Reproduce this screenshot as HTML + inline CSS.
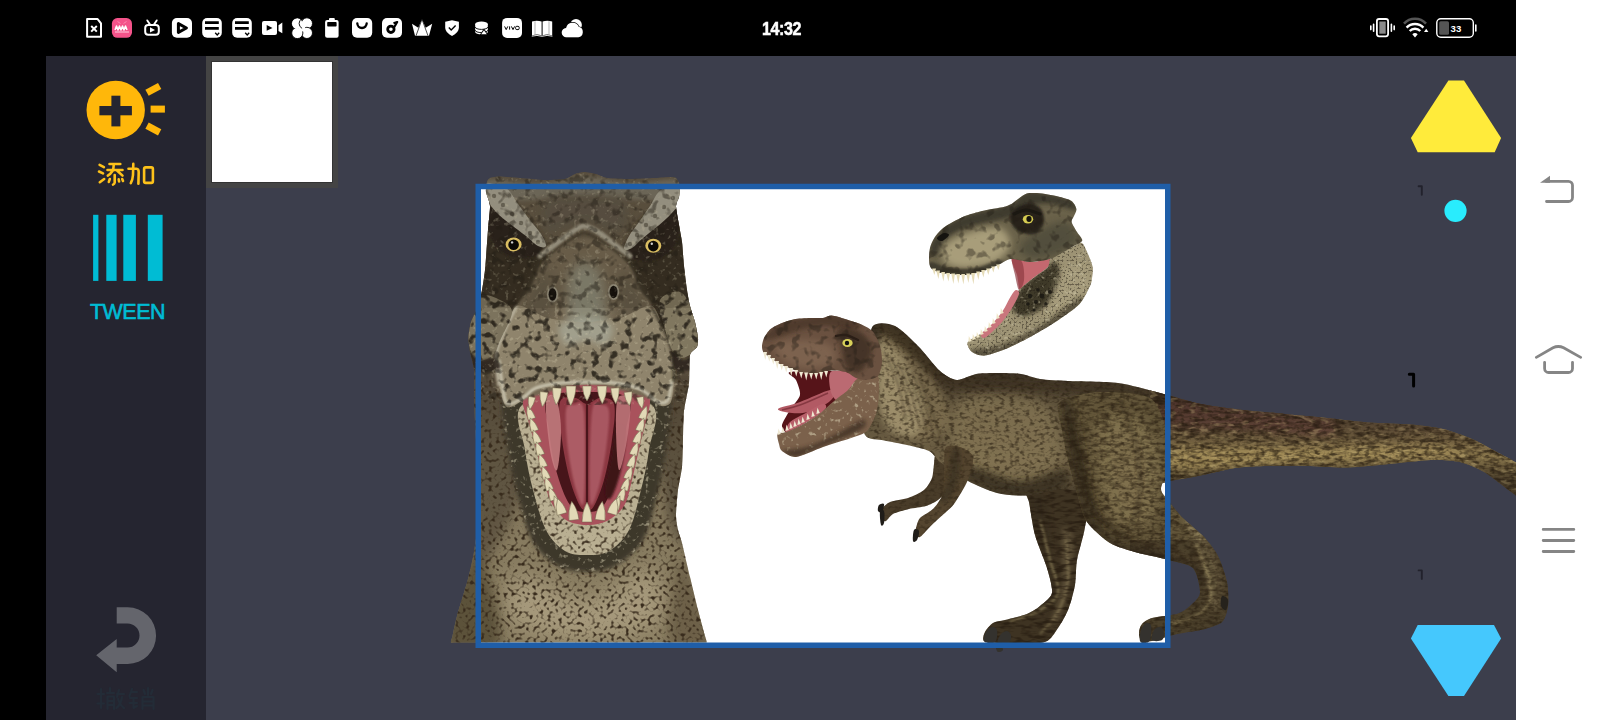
<!DOCTYPE html>
<html><head><meta charset="utf-8">
<style>
html,body{margin:0;padding:0;background:#000;}
body{width:1600px;height:720px;position:relative;overflow:hidden;font-family:"Liberation Sans",sans-serif;}
#status{position:absolute;left:0;top:0;width:1516px;height:56px;background:#000;}
#side{position:absolute;left:46px;top:56px;width:160px;height:664px;background:#252530;}
#main{position:absolute;left:206px;top:56px;width:1310px;height:664px;background:#3c3e4c;}
#nav{position:absolute;left:1516px;top:0;width:84px;height:720px;background:#fff;}
#thumb{position:absolute;left:206px;top:56px;width:132px;height:132px;background:#444;}
#thumb i{position:absolute;left:5px;top:5px;width:122px;height:122px;background:#333;}
#thumb b{position:absolute;left:6px;top:6px;width:120px;height:120px;background:#fff;}
#time{position:absolute;left:762px;top:18.6px;font-size:18.2px;font-weight:bold;color:#fff;letter-spacing:-0.5px;line-height:20px;transform:scaleX(0.885);transform-origin:0 0;-webkit-text-stroke:0.5px #fff;}
#tween{position:absolute;left:89px;top:300.4px;width:77px;text-align:center;font-size:21.5px;color:#00bcd4;line-height:24px;letter-spacing:-0.5px;-webkit-text-stroke:0.6px #00bcd4;}
svg{position:absolute;left:0;top:0;}
</style></head><body>
<div id="status"></div>
<div id="side"></div>
<div id="main"></div>
<div id="nav"></div>
<div id="thumb"><i></i><b></b></div>
<div id="time">14:32</div>
<div id="tween">TWEEN</div>
<!--SCENE--><svg id="scene" style="left:206px;top:56px" width="1310" height="664" viewBox="206 56 1310 664">
<defs>
<filter id="b1" x="-20%" y="-20%" width="140%" height="140%"><feGaussianBlur stdDeviation="1"/></filter>
<filter id="b2" x="-20%" y="-20%" width="140%" height="140%"><feGaussianBlur stdDeviation="2"/></filter>
<filter id="b3" x="-30%" y="-30%" width="160%" height="160%"><feGaussianBlur stdDeviation="3.5"/></filter>
<filter id="b6" x="-40%" y="-40%" width="180%" height="180%"><feGaussianBlur stdDeviation="6"/></filter>
<filter id="b10" x="-50%" y="-50%" width="200%" height="200%"><feGaussianBlur stdDeviation="10"/></filter>
<filter id="spots" x="0" y="0" width="100%" height="100%" color-interpolation-filters="sRGB">
 <feTurbulence type="fractalNoise" baseFrequency="0.27" numOctaves="1" seed="7"/>
 <feColorMatrix type="matrix" values="0 0 0 0 0.22  0 0 0 0 0.17  0 0 0 0 0.11  5 0 0 0 -2.6"/>
</filter>
<filter id="spotsL" x="0" y="0" width="100%" height="100%" color-interpolation-filters="sRGB">
 <feTurbulence type="fractalNoise" baseFrequency="0.22" numOctaves="2" seed="11"/>
 <feColorMatrix type="matrix" values="0 0 0 0 0.85  0 0 0 0 0.82  0 0 0 0 0.70  5 0 0 0 -3.0"/>
</filter>
<filter id="blotch" x="0" y="0" width="100%" height="100%" color-interpolation-filters="sRGB">
 <feTurbulence type="fractalNoise" baseFrequency="0.12" numOctaves="2" seed="5"/>
 <feColorMatrix type="matrix" values="0 0 0 0 0.13  0 0 0 0 0.11  0 0 0 0 0.08  6 0 0 0 -3.2"/>
</filter>
<filter id="wrk" x="0" y="0" width="100%" height="100%" color-interpolation-filters="sRGB">
 <feTurbulence type="fractalNoise" baseFrequency="0.2 0.3" numOctaves="2" seed="4"/>
 <feColorMatrix type="matrix" values="0 0 0 0 0.16  0 0 0 0 0.12  0 0 0 0 0.07  3.5 0 0 0 -1.65"/>
</filter>
<filter id="wrk2" x="0" y="0" width="100%" height="100%" color-interpolation-filters="sRGB">
 <feTurbulence type="fractalNoise" baseFrequency="0.09 0.28" numOctaves="2" seed="21"/>
 <feColorMatrix type="matrix" values="0 0 0 0 0.14  0 0 0 0 0.10  0 0 0 0 0.06  4 0 0 0 -1.8"/>
</filter>
<filter id="wrkL" x="0" y="0" width="100%" height="100%" color-interpolation-filters="sRGB">
 <feTurbulence type="fractalNoise" baseFrequency="0.1 0.22" numOctaves="2" seed="9"/>
 <feColorMatrix type="matrix" values="0 0 0 0 0.80  0 0 0 0 0.72  0 0 0 0 0.50  6 0 0 0 -3.3"/>
</filter>
<filter id="peb" x="0" y="0" width="100%" height="100%" color-interpolation-filters="sRGB">
 <feTurbulence type="fractalNoise" baseFrequency="0.5" numOctaves="1" seed="2"/>
 <feColorMatrix type="matrix" values="0 0 0 0 0.12  0 0 0 0 0.10  0 0 0 0 0.07  6 0 0 0 -3.1"/>
</filter>
</defs>
<rect x="478" y="186" width="690" height="459" fill="#fff"/>
<clipPath id="cF"><path d="M490.0,178.0 C491.5,177.4 496.5,176.5 500.0,176.5 C503.5,176.5 514.8,177.6 520.0,178.0 C525.2,178.4 539.8,179.9 545.0,180.0 C550.2,180.1 561.5,179.7 565.0,179.0 C568.5,178.3 572.8,174.8 575.0,174.0 C577.2,173.2 581.5,172.0 584.0,172.0 C586.5,172.0 593.3,173.3 596.0,174.0 C598.7,174.7 603.0,177.4 607.0,178.0 C611.0,178.6 624.4,179.0 630.0,179.0 C635.6,179.0 650.3,178.2 655.0,178.0 C659.7,177.8 667.5,177.0 670.0,177.0 C672.5,177.0 674.8,176.9 676.0,178.0 C677.2,179.1 679.6,183.8 680.0,186.0 C680.4,188.2 679.5,194.7 679.0,197.0 C678.5,199.3 676.0,202.7 676.0,206.0 C676.0,209.3 678.3,220.8 679.0,225.0 C679.7,229.2 681.4,237.2 682.0,242.0 C682.6,246.8 683.4,260.4 684.0,266.0 C684.6,271.6 686.3,285.3 687.0,290.0 C687.7,294.7 689.1,302.3 690.0,306.0 C690.9,309.7 694.1,318.3 695.0,322.0 C695.9,325.7 697.8,335.1 698.0,338.0 C698.2,340.9 697.9,345.0 697.0,347.0 C696.1,349.0 690.9,350.8 690.0,355.0 C689.1,359.2 689.7,376.5 689.0,383.0 C688.3,389.5 684.7,404.5 684.0,411.0 C683.3,417.5 683.2,432.5 683.0,439.0 C682.8,445.5 682.6,461.1 682.0,467.0 C681.4,472.9 678.7,484.4 678.0,490.0 C677.3,495.6 676.0,510.3 676.0,515.0 C676.0,519.7 677.3,526.7 678.0,530.0 C678.7,533.3 680.6,537.5 682.0,543.0 C683.4,548.5 688.1,569.2 690.0,577.0 C691.9,584.8 696.2,603.1 698.0,610.0 C699.8,616.9 704.0,632.2 705.0,636.0 C706.0,639.8 707.1,641.7 706.5,642.5 C705.9,643.3 712.4,642.5 700.0,642.5 C687.6,642.5 621.0,642.5 600.0,642.5 C579.0,642.5 536.6,642.5 520.0,642.5 C503.4,642.5 466.1,642.5 458.0,642.5 C449.9,642.5 451.6,643.3 451.0,642.5 C450.4,641.7 451.8,639.1 452.5,636.0 C453.2,632.9 455.2,622.6 457.0,616.0 C458.8,609.4 466.0,586.5 468.0,579.0 C470.0,571.5 472.8,558.9 474.0,552.0 C475.2,545.1 477.5,528.4 478.0,520.0 C478.5,511.6 478.2,489.3 478.0,480.0 C477.8,470.7 476.5,449.3 476.0,440.0 C475.5,430.7 474.2,408.2 474.0,400.0 C473.8,391.8 474.5,375.6 474.0,370.0 C473.5,364.4 470.6,355.9 470.0,352.0 C469.4,348.1 468.4,340.5 468.5,337.0 C468.6,333.5 470.1,325.0 471.0,322.0 C471.9,319.0 474.8,314.1 476.0,311.0 C477.2,307.9 479.9,299.8 481.0,295.0 C482.1,290.2 484.2,277.6 485.0,270.0 C485.8,262.4 487.4,237.5 488.0,230.0 C488.6,222.5 490.2,210.4 490.0,206.0 C489.8,201.6 486.4,194.8 486.0,192.0 C485.6,189.2 486.5,183.6 487.0,182.0 C487.5,180.4 488.5,178.6 490.0,178.0 Z"/></clipPath>
<linearGradient id="gF" x1="0" y1="172" x2="0" y2="642" gradientUnits="userSpaceOnUse">
<stop offset="0" stop-color="#615645"/><stop offset="0.45" stop-color="#695d49"/><stop offset="0.6" stop-color="#84785d"/><stop offset="1" stop-color="#8a7e62"/></linearGradient>
<g clip-path="url(#cF)">
<rect x="440" y="165" width="280" height="480" fill="url(#gF)"/>
<path d="M640.0,400.0 C646.7,385.0 690.0,356.7 700.0,380.0 C710.0,403.3 704.7,515.0 700.0,540.0 C695.3,565.0 678.7,541.7 672.0,530.0 C665.3,518.3 665.3,491.7 660.0,470.0 C654.7,448.3 633.3,415.0 640.0,400.0 Z" fill="#3a3226" filter="url(#b6)" opacity="0.55"/>
<path d="M470.0,380.0 C478.3,353.3 510.3,385.0 520.0,400.0 C529.7,415.0 531.3,446.7 528.0,470.0 C524.7,493.3 509.7,525.0 500.0,540.0 C490.3,555.0 475.0,586.7 470.0,560.0 C465.0,533.3 461.7,406.7 470.0,380.0 Z" fill="#3a3226" filter="url(#b6)" opacity="0.5"/>
<path d="M520.0,575.0 C532.8,571.7 565.3,600.8 587.0,600.0 C608.7,599.2 637.8,566.7 650.0,570.0 C662.2,573.3 670.5,608.3 660.0,620.0 C649.5,631.7 612.0,640.0 587.0,640.0 C562.0,640.0 521.2,630.8 510.0,620.0 C498.8,609.2 507.2,578.3 520.0,575.0 Z" fill="#c2b595" filter="url(#b10)" opacity="0.5"/>
<path d="M450.0,600.0 C455.8,585.8 471.7,552.5 480.0,560.0 C488.3,567.5 505.8,630.8 500.0,645.0 C494.2,659.2 453.3,652.5 445.0,645.0 C436.7,637.5 444.2,614.2 450.0,600.0 Z" fill="#4a3f2c" filter="url(#b6)" opacity="0.7"/>
<path d="M680.0,560.0 C685.0,552.5 694.7,585.8 700.0,600.0 C705.3,614.2 717.0,637.5 712.0,645.0 C707.0,652.5 675.3,659.2 670.0,645.0 C664.7,630.8 675.0,567.5 680.0,560.0 Z" fill="#5a4e38" filter="url(#b6)" opacity="0.6"/>
<rect x="440" y="380" width="280" height="265" filter="url(#spots)"/>
</g>
<g clip-path="url(#cF)">
<path d="M503.0,398.0 C506.7,386.8 516.0,386.3 530.0,383.0 C544.0,379.7 567.8,378.0 587.0,378.0 C606.2,378.0 631.2,379.7 645.0,383.0 C658.8,386.3 666.5,386.8 670.0,398.0 C673.5,409.2 668.3,433.0 666.0,450.0 C663.7,467.0 660.0,484.7 656.0,500.0 C652.0,515.3 648.8,531.0 642.0,542.0 C635.2,553.0 624.2,561.0 615.0,566.0 C605.8,571.0 596.5,572.0 587.0,572.0 C577.5,572.0 567.0,571.0 558.0,566.0 C549.0,561.0 539.5,553.0 533.0,542.0 C526.5,531.0 523.2,515.3 519.0,500.0 C514.8,484.7 510.7,467.0 508.0,450.0 C505.3,433.0 499.3,409.2 503.0,398.0 Z" fill="#3e372c" filter="url(#b2)"/>
<clipPath id="tc1"><path d="M503.0,398.0 C506.7,386.8 516.0,386.3 530.0,383.0 C544.0,379.7 567.8,378.0 587.0,378.0 C606.2,378.0 631.2,379.7 645.0,383.0 C658.8,386.3 666.5,386.8 670.0,398.0 C673.5,409.2 668.3,433.0 666.0,450.0 C663.7,467.0 660.0,484.7 656.0,500.0 C652.0,515.3 648.8,531.0 642.0,542.0 C635.2,553.0 624.2,561.0 615.0,566.0 C605.8,571.0 596.5,572.0 587.0,572.0 C577.5,572.0 567.0,571.0 558.0,566.0 C549.0,561.0 539.5,553.0 533.0,542.0 C526.5,531.0 523.2,515.3 519.0,500.0 C514.8,484.7 510.7,467.0 508.0,450.0 C505.3,433.0 499.3,409.2 503.0,398.0 Z"/></clipPath><g clip-path="url(#tc1)" ><rect x="495" y="374" width="182" height="202" filter="url(#spotsL)" opacity="0.5"/></g>
<path d="M522.0,405.0 C532.3,395.8 565.3,395.0 587.0,395.0 C608.7,395.0 641.7,395.8 652.0,405.0 C662.3,414.2 650.8,435.8 649.0,450.0 C647.2,464.2 644.3,476.7 641.0,490.0 C637.7,503.3 634.3,519.8 629.0,530.0 C623.7,540.2 616.0,546.8 609.0,551.0 C602.0,555.2 594.3,555.0 587.0,555.0 C579.7,555.0 571.8,555.2 565.0,551.0 C558.2,546.8 551.3,540.2 546.0,530.0 C540.7,519.8 536.5,503.3 533.0,490.0 C529.5,476.7 526.8,464.2 525.0,450.0 C523.2,435.8 511.7,414.2 522.0,405.0 Z" fill="#b9af92" />
<clipPath id="tc2"><path d="M522.0,405.0 C532.3,395.8 565.3,395.0 587.0,395.0 C608.7,395.0 641.7,395.8 652.0,405.0 C662.3,414.2 650.8,435.8 649.0,450.0 C647.2,464.2 644.3,476.7 641.0,490.0 C637.7,503.3 634.3,519.8 629.0,530.0 C623.7,540.2 616.0,546.8 609.0,551.0 C602.0,555.2 594.3,555.0 587.0,555.0 C579.7,555.0 571.8,555.2 565.0,551.0 C558.2,546.8 551.3,540.2 546.0,530.0 C540.7,519.8 536.5,503.3 533.0,490.0 C529.5,476.7 526.8,464.2 525.0,450.0 C523.2,435.8 511.7,414.2 522.0,405.0 Z"/></clipPath><g clip-path="url(#tc2)" ><rect x="508" y="391" width="159" height="168" filter="url(#spots)" opacity="0.9"/></g>
<path d="M523.0,401.0 C524.0,396.0 527.8,392.7 534.0,390.0 C540.2,387.3 550.7,386.0 560.0,385.0 C569.3,384.0 580.0,383.8 590.0,384.0 C600.0,384.2 610.7,384.5 620.0,386.0 C629.3,387.5 641.0,390.2 646.0,393.0 C651.0,395.8 650.2,397.7 650.0,403.0 C649.8,408.3 646.7,418.0 645.0,425.0 C643.3,432.0 642.2,435.8 640.0,445.0 C637.8,454.2 634.7,469.8 632.0,480.0 C629.3,490.2 628.2,499.2 624.0,506.0 C619.8,512.8 613.2,517.8 607.0,521.0 C600.8,524.2 593.8,525.2 587.0,525.0 C580.2,524.8 572.0,523.8 566.0,520.0 C560.0,516.2 554.8,509.2 551.0,502.0 C547.2,494.8 545.7,486.5 543.0,477.0 C540.3,467.5 537.5,454.5 535.0,445.0 C532.5,435.5 530.0,427.3 528.0,420.0 C526.0,412.7 522.0,406.0 523.0,401.0 Z" fill="#a9525c" />
<path d="M548.0,398.0 C554.3,391.7 573.7,392.0 587.0,392.0 C600.3,392.0 621.5,391.7 628.0,398.0 C634.5,404.3 627.7,418.0 626.0,430.0 C624.3,442.0 621.7,457.5 618.0,470.0 C614.3,482.5 609.2,498.0 604.0,505.0 C598.8,512.0 592.7,512.0 587.0,512.0 C581.3,512.0 575.2,512.0 570.0,505.0 C564.8,498.0 559.5,482.5 556.0,470.0 C552.5,457.5 550.3,442.0 549.0,430.0 C547.7,418.0 541.7,404.3 548.0,398.0 Z" fill="#47151a" />
<path d="M560.0,402.0 C562.2,395.0 570.5,397.7 575.0,398.0 C579.5,398.3 582.8,404.0 587.0,404.0 C591.2,404.0 595.5,398.0 600.0,398.0 C604.5,398.0 612.0,397.0 614.0,404.0 C616.0,411.0 613.7,427.3 612.0,440.0 C610.3,452.7 607.0,469.0 604.0,480.0 C601.0,491.0 596.8,501.0 594.0,506.0 C591.2,511.0 589.3,510.0 587.0,510.0 C584.7,510.0 582.8,511.0 580.0,506.0 C577.2,501.0 573.0,491.0 570.0,480.0 C567.0,469.0 563.7,453.0 562.0,440.0 C560.3,427.0 557.8,409.0 560.0,402.0 Z" fill="#8c3842" />
<path d="M566.0,410.0 C567.0,402.5 571.0,404.7 574.0,405.0 C577.0,405.3 582.3,396.2 584.0,412.0 C585.7,427.8 585.3,487.0 584.0,500.0 C582.7,513.0 578.7,498.3 576.0,490.0 C573.3,481.7 569.7,463.3 568.0,450.0 C566.3,436.7 565.0,417.5 566.0,410.0 Z" fill="#b5666e" filter="url(#b1)" opacity="0.8"/>
<path d="M592.0,412.0 C594.0,396.2 599.2,405.0 602.0,405.0 C604.8,405.0 608.3,404.5 609.0,412.0 C609.7,419.5 607.8,437.0 606.0,450.0 C604.2,463.0 600.7,481.7 598.0,490.0 C595.3,498.3 591.0,513.0 590.0,500.0 C589.0,487.0 590.0,427.8 592.0,412.0 Z" fill="#b0606a" filter="url(#b1)" opacity="0.8"/>
<path d="M587.0,404.0 L587.0,508.0" fill="none" stroke="#4a151b" stroke-width="2.2"/>
<path d="M616.0,425.0 C618.3,421.2 625.2,424.5 626.0,432.0 C626.8,439.5 623.5,459.0 621.0,470.0 C618.5,481.0 613.7,494.7 611.0,498.0 C608.3,501.3 604.8,497.2 605.0,490.0 C605.2,482.8 610.2,465.8 612.0,455.0 C613.8,444.2 613.7,428.8 616.0,425.0 Z" fill="#3d1217" filter="url(#b1)"/>
<path d="M546.0,402.0 C547.0,393.3 553.5,393.3 556.0,398.0 C558.5,402.7 560.8,418.0 561.0,430.0 C561.2,442.0 558.8,466.7 557.0,470.0 C555.2,473.3 551.8,461.3 550.0,450.0 C548.2,438.7 545.0,410.7 546.0,402.0 Z" fill="#c47c80" opacity="0.9"/>
<path d="M618.0,398.0 C620.3,393.3 628.5,395.0 630.0,402.0 C631.5,409.0 628.8,428.7 627.0,440.0 C625.2,451.3 620.8,471.7 619.0,470.0 C617.2,468.3 616.2,442.0 616.0,430.0 C615.8,418.0 615.7,402.7 618.0,398.0 Z" fill="#bf767a" opacity="0.9"/>
<path d="M-3.8,0 Q-3.8,7.7 0,14.0 Q3.8,7.7 3.8,0 Z" transform="translate(532.0,419.0) rotate(160)" fill="#e2d9b6" stroke="#6d6248" stroke-width="0.5"/>
<path d="M-3.8,0 Q-3.8,7.7 0,14.0 Q3.8,7.7 3.8,0 Z" transform="translate(535.0,431.0) rotate(160)" fill="#e2d9b6" stroke="#6d6248" stroke-width="0.5"/>
<path d="M-3.8,0 Q-3.8,7.7 0,14.0 Q3.8,7.7 3.8,0 Z" transform="translate(538.0,443.0) rotate(160)" fill="#e2d9b6" stroke="#6d6248" stroke-width="0.5"/>
<path d="M-3.8,0 Q-3.8,7.7 0,14.0 Q3.8,7.7 3.8,0 Z" transform="translate(541.0,455.0) rotate(160)" fill="#e2d9b6" stroke="#6d6248" stroke-width="0.5"/>
<path d="M-3.8,0 Q-3.8,7.7 0,14.0 Q3.8,7.7 3.8,0 Z" transform="translate(544.0,467.0) rotate(160)" fill="#e2d9b6" stroke="#6d6248" stroke-width="0.5"/>
<path d="M-3.8,0 Q-3.8,7.7 0,14.0 Q3.8,7.7 3.8,0 Z" transform="translate(547.0,479.0) rotate(160)" fill="#e2d9b6" stroke="#6d6248" stroke-width="0.5"/>
<path d="M-3.8,0 Q-3.8,7.7 0,14.0 Q3.8,7.7 3.8,0 Z" transform="translate(550.0,490.0) rotate(160)" fill="#e2d9b6" stroke="#6d6248" stroke-width="0.5"/>
<path d="M-3.8,0 Q-3.8,7.7 0,14.0 Q3.8,7.7 3.8,0 Z" transform="translate(554.0,500.0) rotate(160)" fill="#e2d9b6" stroke="#6d6248" stroke-width="0.5"/>
<path d="M-3.8,0 Q-3.8,7.7 0,14.0 Q3.8,7.7 3.8,0 Z" transform="translate(559.0,509.0) rotate(160)" fill="#e2d9b6" stroke="#6d6248" stroke-width="0.5"/>
<path d="M-3.8,0 Q-3.8,7.7 0,14.0 Q3.8,7.7 3.8,0 Z" transform="translate(642.0,419.0) rotate(200)" fill="#e2d9b6" stroke="#6d6248" stroke-width="0.5"/>
<path d="M-3.8,0 Q-3.8,7.7 0,14.0 Q3.8,7.7 3.8,0 Z" transform="translate(639.0,431.0) rotate(200)" fill="#e2d9b6" stroke="#6d6248" stroke-width="0.5"/>
<path d="M-3.8,0 Q-3.8,7.7 0,14.0 Q3.8,7.7 3.8,0 Z" transform="translate(636.0,443.0) rotate(200)" fill="#e2d9b6" stroke="#6d6248" stroke-width="0.5"/>
<path d="M-3.8,0 Q-3.8,7.7 0,14.0 Q3.8,7.7 3.8,0 Z" transform="translate(633.0,455.0) rotate(200)" fill="#e2d9b6" stroke="#6d6248" stroke-width="0.5"/>
<path d="M-3.8,0 Q-3.8,7.7 0,14.0 Q3.8,7.7 3.8,0 Z" transform="translate(630.0,467.0) rotate(200)" fill="#e2d9b6" stroke="#6d6248" stroke-width="0.5"/>
<path d="M-3.8,0 Q-3.8,7.7 0,14.0 Q3.8,7.7 3.8,0 Z" transform="translate(627.0,479.0) rotate(200)" fill="#e2d9b6" stroke="#6d6248" stroke-width="0.5"/>
<path d="M-3.8,0 Q-3.8,7.7 0,14.0 Q3.8,7.7 3.8,0 Z" transform="translate(624.0,490.0) rotate(200)" fill="#e2d9b6" stroke="#6d6248" stroke-width="0.5"/>
<path d="M-3.8,0 Q-3.8,7.7 0,14.0 Q3.8,7.7 3.8,0 Z" transform="translate(620.0,500.0) rotate(200)" fill="#e2d9b6" stroke="#6d6248" stroke-width="0.5"/>
<path d="M-3.8,0 Q-3.8,7.7 0,14.0 Q3.8,7.7 3.8,0 Z" transform="translate(615.0,509.0) rotate(200)" fill="#e2d9b6" stroke="#6d6248" stroke-width="0.5"/>
<path d="M-5.0,0 Q-5.0,8.8 0,16.0 Q5.0,8.8 5.0,0 Z" transform="translate(562.0,514.0) rotate(164)" fill="#e2d9b6" stroke="#6d6248" stroke-width="0.5"/>
<path d="M-5.0,0 Q-5.0,10.5 0,19.0 Q5.0,10.5 5.0,0 Z" transform="translate(574.0,520.0) rotate(173)" fill="#e2d9b6" stroke="#6d6248" stroke-width="0.5"/>
<path d="M-5.0,0 Q-5.0,11.0 0,20.0 Q5.0,11.0 5.0,0 Z" transform="translate(587.0,522.0) rotate(180)" fill="#e2d9b6" stroke="#6d6248" stroke-width="0.5"/>
<path d="M-5.0,0 Q-5.0,10.5 0,19.0 Q5.0,10.5 5.0,0 Z" transform="translate(600.0,520.0) rotate(187)" fill="#e2d9b6" stroke="#6d6248" stroke-width="0.5"/>
<path d="M-5.0,0 Q-5.0,8.8 0,16.0 Q5.0,8.8 5.0,0 Z" transform="translate(612.0,514.0) rotate(196)" fill="#e2d9b6" stroke="#6d6248" stroke-width="0.5"/>
</g>
<g clip-path="url(#cF)">
<path d="M483.0,200.0 C492.2,185.8 509.7,206.7 520.0,215.0 C530.3,223.3 543.3,235.8 545.0,250.0 C546.7,264.2 536.7,284.2 530.0,300.0 C523.3,315.8 515.0,335.8 505.0,345.0 C495.0,354.2 476.7,362.5 470.0,355.0 C463.3,347.5 462.8,325.8 465.0,300.0 C467.2,274.2 473.8,214.2 483.0,200.0 Z" fill="#352d22" filter="url(#b3)" opacity="0.95"/>
<path d="M682.0,200.0 C673.7,185.8 659.5,206.7 650.0,215.0 C640.5,223.3 626.7,235.8 625.0,250.0 C623.3,264.2 633.8,284.2 640.0,300.0 C646.2,315.8 652.0,335.8 662.0,345.0 C672.0,354.2 693.7,362.5 700.0,355.0 C706.3,347.5 703.0,325.8 700.0,300.0 C697.0,274.2 690.3,214.2 682.0,200.0 Z" fill="#352d22" filter="url(#b3)" opacity="0.95"/>
<path d="M488.0,180.0 C496.3,177.7 524.0,184.7 540.0,184.0 C556.0,183.3 569.0,176.2 584.0,176.0 C599.0,175.8 614.3,182.3 630.0,183.0 C645.7,183.7 670.3,177.5 678.0,180.0 C685.7,182.5 682.3,194.7 676.0,198.0 C669.7,201.3 655.3,200.3 640.0,200.0 C624.7,199.7 602.3,196.0 584.0,196.0 C565.7,196.0 545.7,199.7 530.0,200.0 C514.3,200.3 497.0,201.3 490.0,198.0 C483.0,194.7 479.7,182.3 488.0,180.0 Z" fill="#7d7767" filter="url(#b2)" opacity="0.9"/>
<path d="M545.0,200.0 C551.0,194.0 570.7,196.0 584.0,196.0 C597.3,196.0 619.0,194.0 625.0,200.0 C631.0,206.0 626.8,228.3 620.0,232.0 C613.2,235.7 596.0,222.0 584.0,222.0 C572.0,222.0 554.5,235.7 548.0,232.0 C541.5,228.3 539.0,206.0 545.0,200.0 Z" fill="#5e574a" filter="url(#b3)" opacity="0.8"/>
<path d="M489.0,200.0 C491.7,199.0 497.8,209.7 503.0,214.0 C508.2,218.3 514.7,222.0 520.0,226.0 C525.3,230.0 531.2,234.5 535.0,238.0 C538.8,241.5 542.8,244.0 543.0,247.0 C543.2,250.0 540.2,254.2 536.0,256.0 C531.8,257.8 523.7,258.7 518.0,258.0 C512.3,257.3 506.3,255.0 502.0,252.0 C497.7,249.0 494.5,245.3 492.0,240.0 C489.5,234.7 487.5,226.7 487.0,220.0 C486.5,213.3 486.3,201.0 489.0,200.0 Z" fill="#2a231a" filter="url(#b1)"/>
<path d="M678.0,202.0 C675.3,201.0 669.0,211.7 664.0,216.0 C659.0,220.3 653.0,224.0 648.0,228.0 C643.0,232.0 637.7,236.5 634.0,240.0 C630.3,243.5 626.3,246.0 626.0,249.0 C625.7,252.0 628.0,256.0 632.0,258.0 C636.0,260.0 644.3,261.5 650.0,261.0 C655.7,260.5 661.7,258.0 666.0,255.0 C670.3,252.0 673.7,248.5 676.0,243.0 C678.3,237.5 679.7,228.8 680.0,222.0 C680.3,215.2 680.7,203.0 678.0,202.0 Z" fill="#2a231a" filter="url(#b1)"/>
<path d="M486.0,184.0 C489.0,182.0 500.7,184.7 506.0,188.0 C511.3,191.3 514.0,198.7 518.0,204.0 C522.0,209.3 526.2,215.0 530.0,220.0 C533.8,225.0 538.3,229.7 541.0,234.0 C543.7,238.3 546.5,244.0 546.0,246.0 C545.5,248.0 541.3,247.7 538.0,246.0 C534.7,244.3 530.7,239.7 526.0,236.0 C521.3,232.3 515.0,228.0 510.0,224.0 C505.0,220.0 499.7,216.0 496.0,212.0 C492.3,208.0 489.7,204.7 488.0,200.0 C486.3,195.3 483.0,186.0 486.0,184.0 Z" fill="#a9a493" />
<path d="M681.0,186.0 C677.8,184.0 666.2,186.7 661.0,190.0 C655.8,193.3 653.7,200.7 650.0,206.0 C646.3,211.3 642.5,217.0 639.0,222.0 C635.5,227.0 631.5,231.5 629.0,236.0 C626.5,240.5 623.5,247.0 624.0,249.0 C624.5,251.0 628.8,249.8 632.0,248.0 C635.2,246.2 638.7,241.7 643.0,238.0 C647.3,234.3 653.3,230.0 658.0,226.0 C662.7,222.0 667.3,218.0 671.0,214.0 C674.7,210.0 678.3,206.7 680.0,202.0 C681.7,197.3 684.2,188.0 681.0,186.0 Z" fill="#a9a493" />
<circle cx="494" cy="196" r="2.2" fill="#5a5447" opacity="0.7"/>
<circle cx="503" cy="205" r="2.2" fill="#5a5447" opacity="0.7"/>
<circle cx="512" cy="214" r="2.2" fill="#5a5447" opacity="0.7"/>
<circle cx="521" cy="223" r="2.2" fill="#5a5447" opacity="0.7"/>
<circle cx="530" cy="233" r="2.2" fill="#5a5447" opacity="0.7"/>
<circle cx="538" cy="242" r="2.2" fill="#5a5447" opacity="0.7"/>
<circle cx="673" cy="198" r="2.2" fill="#5a5447" opacity="0.7"/>
<circle cx="664" cy="207" r="2.2" fill="#5a5447" opacity="0.7"/>
<circle cx="655" cy="216" r="2.2" fill="#5a5447" opacity="0.7"/>
<circle cx="646" cy="225" r="2.2" fill="#5a5447" opacity="0.7"/>
<circle cx="637" cy="235" r="2.2" fill="#5a5447" opacity="0.7"/>
<circle cx="630" cy="244" r="2.2" fill="#5a5447" opacity="0.7"/>
<path d="M540.0,256.0 C542.7,254.0 550.7,248.0 556.0,244.0 C561.3,240.0 567.3,235.0 572.0,232.0 C576.7,229.0 579.7,226.0 584.0,226.0 C588.3,226.0 593.0,229.0 598.0,232.0 C603.0,235.0 608.7,240.0 614.0,244.0 C619.3,248.0 627.3,254.0 630.0,256.0" fill="none" stroke="#a8a28f" stroke-width="5" stroke-linecap="round" filter="url(#b1)"/>
<path d="M541.0,262.0 C543.7,260.0 551.8,253.8 557.0,250.0 C562.2,246.2 567.5,241.8 572.0,239.0 C576.5,236.2 579.7,233.0 584.0,233.0 C588.3,233.0 593.2,236.2 598.0,239.0 C602.8,241.8 607.8,246.2 613.0,250.0 C618.2,253.8 626.3,260.0 629.0,262.0" fill="none" stroke="#3f382c" stroke-width="2.5" filter="url(#b1)" opacity="0.8"/>
<path d="M544.0,262.0 C553.0,253.3 570.3,238.0 584.0,238.0 C597.7,238.0 616.7,253.3 626.0,262.0 C635.3,270.7 635.7,282.7 640.0,290.0 C644.3,297.3 646.7,295.2 652.0,306.0 C657.3,316.8 669.3,339.3 672.0,355.0 C674.7,370.7 682.2,395.2 668.0,400.0 C653.8,404.8 613.7,384.0 587.0,384.0 C560.3,384.0 523.2,404.8 508.0,400.0 C492.8,395.2 494.5,370.7 496.0,355.0 C497.5,339.3 511.3,316.8 517.0,306.0 C522.7,295.2 525.5,297.3 530.0,290.0 C534.5,282.7 535.0,270.7 544.0,262.0 Z" fill="#746853" filter="url(#b1)"/>
<path d="M570.0,275.0 C572.7,265.3 579.0,262.0 584.0,262.0 C589.0,262.0 596.3,265.3 600.0,275.0 C603.7,284.7 606.0,307.5 606.0,320.0 C606.0,332.5 605.2,345.0 600.0,350.0 C594.8,355.0 580.3,355.0 575.0,350.0 C569.7,345.0 568.8,332.5 568.0,320.0 C567.2,307.5 567.3,284.7 570.0,275.0 Z" fill="#959887" filter="url(#b6)" opacity="0.7"/>
<path d="M520.0,310.0 C526.7,296.3 539.0,271.7 545.0,270.0 C551.0,268.3 556.8,287.5 556.0,300.0 C555.2,312.5 548.5,336.3 540.0,345.0 C531.5,353.7 508.3,357.8 505.0,352.0 C501.7,346.2 513.3,323.7 520.0,310.0 Z" fill="#57503f" filter="url(#b6)" opacity="0.55"/>
<path d="M650.0,310.0 C643.7,296.3 631.7,271.7 626.0,270.0 C620.3,268.3 615.3,287.5 616.0,300.0 C616.7,312.5 622.0,336.3 630.0,345.0 C638.0,353.7 660.7,357.8 664.0,352.0 C667.3,346.2 656.3,323.7 650.0,310.0 Z" fill="#57503f" filter="url(#b6)" opacity="0.55"/>
<path d="M517.8,305.6 C512.1,307.2 508.0,323.3 505.0,330.0 C502.0,336.7 496.4,348.3 495.6,355.6 C494.8,362.9 497.5,378.1 499.0,385.0 C500.5,391.9 503.5,405.0 506.7,407.0 C509.9,409.0 519.3,402.3 523.0,400.0 C526.7,397.7 530.0,391.9 534.4,390.0 C538.8,388.1 550.1,386.7 556.0,386.0 C561.9,385.3 572.2,384.9 579.0,384.7 C585.8,384.5 600.2,384.3 606.7,384.7 C613.2,385.1 622.8,386.9 628.0,388.0 C633.2,389.1 641.4,390.7 645.6,393.0 C649.8,395.3 656.1,404.3 659.4,405.6 C662.7,406.9 668.7,406.2 670.6,402.8 C672.5,399.4 673.6,386.3 674.0,380.0 C674.4,373.7 674.6,362.3 673.3,355.6 C672.0,348.9 667.0,336.7 664.0,330.0 C661.0,323.3 656.9,307.2 651.0,305.6 C645.1,304.0 628.9,315.8 620.0,318.0 C611.1,320.2 593.6,322.0 584.0,322.0 C574.4,322.0 556.8,320.2 548.0,318.0 C539.2,315.8 523.5,304.0 517.8,305.6 Z" fill="#8f846c" />
<clipPath id="tc3"><path d="M517.8,305.6 C512.1,307.2 508.0,323.3 505.0,330.0 C502.0,336.7 496.4,348.3 495.6,355.6 C494.8,362.9 497.5,378.1 499.0,385.0 C500.5,391.9 503.5,405.0 506.7,407.0 C509.9,409.0 519.3,402.3 523.0,400.0 C526.7,397.7 530.0,391.9 534.4,390.0 C538.8,388.1 550.1,386.7 556.0,386.0 C561.9,385.3 572.2,384.9 579.0,384.7 C585.8,384.5 600.2,384.3 606.7,384.7 C613.2,385.1 622.8,386.9 628.0,388.0 C633.2,389.1 641.4,390.7 645.6,393.0 C649.8,395.3 656.1,404.3 659.4,405.6 C662.7,406.9 668.7,406.2 670.6,402.8 C672.5,399.4 673.6,386.3 674.0,380.0 C674.4,373.7 674.6,362.3 673.3,355.6 C672.0,348.9 667.0,336.7 664.0,330.0 C661.0,323.3 656.9,307.2 651.0,305.6 C645.1,304.0 628.9,315.8 620.0,318.0 C611.1,320.2 593.6,322.0 584.0,322.0 C574.4,322.0 556.8,320.2 548.0,318.0 C539.2,315.8 523.5,304.0 517.8,305.6 Z"/></clipPath><g clip-path="url(#tc3)" ><rect x="491" y="300" width="188" height="113" filter="url(#blotch)" opacity="0.65"/></g>
<path d="M499.0,360.0 C499.7,365.0 501.5,382.7 503.0,390.0 C504.5,397.3 504.5,402.8 508.0,404.0 C511.5,405.2 519.3,399.7 524.0,397.0 C528.7,394.3 530.0,390.3 536.0,388.0 C542.0,385.7 551.5,384.0 560.0,383.0 C568.5,382.0 577.8,382.0 587.0,382.0 C596.2,382.0 606.2,381.8 615.0,383.0 C623.8,384.2 632.8,385.8 640.0,389.0 C647.2,392.2 653.3,400.2 658.0,402.0 C662.7,403.8 665.7,403.7 668.0,400.0 C670.3,396.3 671.3,383.3 672.0,380.0" fill="none" stroke="#cfcab6" stroke-width="3" filter="url(#b1)" opacity="0.9"/>
<path d="M517.0,306.0 C515.0,310.0 508.5,321.7 505.0,330.0 C501.5,338.3 497.0,346.7 496.0,356.0 C495.0,365.3 498.5,381.0 499.0,386.0" fill="none" stroke="#c9c4b0" stroke-width="2.5" filter="url(#b1)" opacity="0.8"/>
<path d="M651.0,306.0 C653.2,310.0 660.3,321.7 664.0,330.0 C667.7,338.3 671.3,347.3 673.0,356.0 C674.7,364.7 673.8,377.7 674.0,382.0" fill="none" stroke="#2d261c" stroke-width="3" filter="url(#b1)" opacity="0.7"/>
<path d="M560.0,325.0 C563.5,320.5 578.3,318.0 587.0,318.0 C595.7,318.0 608.8,320.5 612.0,325.0 C615.2,329.5 610.2,342.5 606.0,345.0 C601.8,347.5 593.7,340.0 587.0,340.0 C580.3,340.0 570.5,347.5 566.0,345.0 C561.5,342.5 556.5,329.5 560.0,325.0 Z" fill="#a9ab9b" filter="url(#b3)" opacity="0.7"/>
<ellipse cx="552.5" cy="294.5" rx="5.6" ry="8" fill="#9c9582"/>
<ellipse cx="552.5" cy="294.5" rx="3.9" ry="6.2" fill="#120e0a"/>
<ellipse cx="613.6" cy="292" rx="5.6" ry="8" fill="#9c9582"/>
<ellipse cx="613.6" cy="292" rx="3.9" ry="6.2" fill="#120e0a"/>
<path d="M481.0,296.0 C485.8,293.0 494.8,297.3 500.0,300.0 C505.2,302.7 512.0,305.3 512.0,312.0 C512.0,318.7 503.3,332.7 500.0,340.0 C496.7,347.3 496.0,352.7 492.0,356.0 C488.0,359.3 480.0,362.7 476.0,360.0 C472.0,357.3 468.8,347.0 468.0,340.0 C467.2,333.0 468.8,325.3 471.0,318.0 C473.2,310.7 476.2,299.0 481.0,296.0 Z" fill="#7c735d" />
<clipPath id="tc4"><path d="M481.0,296.0 C485.8,293.0 494.8,297.3 500.0,300.0 C505.2,302.7 512.0,305.3 512.0,312.0 C512.0,318.7 503.3,332.7 500.0,340.0 C496.7,347.3 496.0,352.7 492.0,356.0 C488.0,359.3 480.0,362.7 476.0,360.0 C472.0,357.3 468.8,347.0 468.0,340.0 C467.2,333.0 468.8,325.3 471.0,318.0 C473.2,310.7 476.2,299.0 481.0,296.0 Z"/></clipPath><g clip-path="url(#tc4)" ><rect x="463" y="289" width="53" height="78" filter="url(#blotch)" opacity="0.7"/></g>
<path d="M660.0,300.0 C662.7,294.5 674.7,290.3 680.0,292.0 C685.3,293.7 688.8,302.3 692.0,310.0 C695.2,317.7 698.3,331.3 699.0,338.0 C699.7,344.7 698.8,346.7 696.0,350.0 C693.2,353.3 686.0,358.0 682.0,358.0 C678.0,358.0 675.0,355.5 672.0,350.0 C669.0,344.5 666.0,333.3 664.0,325.0 C662.0,316.7 657.3,305.5 660.0,300.0 Z" fill="#80775f" />
<clipPath id="tc5"><path d="M660.0,300.0 C662.7,294.5 674.7,290.3 680.0,292.0 C685.3,293.7 688.8,302.3 692.0,310.0 C695.2,317.7 698.3,331.3 699.0,338.0 C699.7,344.7 698.8,346.7 696.0,350.0 C693.2,353.3 686.0,358.0 682.0,358.0 C678.0,358.0 675.0,355.5 672.0,350.0 C669.0,344.5 666.0,333.3 664.0,325.0 C662.0,316.7 657.3,305.5 660.0,300.0 Z"/></clipPath><g clip-path="url(#tc5)" ><rect x="653" y="286" width="50" height="76" filter="url(#blotch)" opacity="0.7"/></g>
<path d="M470.0,352.0 C470.7,350.0 476.0,359.0 480.0,360.0 C484.0,361.0 490.7,356.7 494.0,358.0 C497.3,359.3 503.0,365.7 500.0,368.0 C497.0,370.3 481.0,374.7 476.0,372.0 C471.0,369.3 469.3,354.0 470.0,352.0 Z" fill="#2a231a" filter="url(#b1)" opacity="0.85"/>
<path d="M672.0,352.0 C673.3,350.3 679.7,360.0 684.0,360.0 C688.3,360.0 696.3,350.7 698.0,352.0 C699.7,353.3 697.7,365.0 694.0,368.0 C690.3,371.0 679.7,372.7 676.0,370.0 C672.3,367.3 670.7,353.7 672.0,352.0 Z" fill="#2a231a" filter="url(#b1)" opacity="0.85"/>
<clipPath id="cHeadTex"><path d="M465.0,170.0 C504.7,138.3 660.0,138.3 700.0,170.0 C740.0,201.7 706.7,321.7 705.0,360.0 C703.3,398.3 727.5,393.3 690.0,400.0 C652.5,406.7 518.0,406.7 480.0,400.0 C442.0,393.3 464.5,398.3 462.0,360.0 C459.5,321.7 425.3,201.7 465.0,170.0 Z"/></clipPath>
<g clip-path="url(#cHeadTex)"><rect x="460" y="168" width="250" height="240" filter="url(#blotch)" opacity="0.45"/><rect x="460" y="168" width="250" height="240" filter="url(#spotsL)" opacity="0.3"/></g>
<rect x="460" y="168" width="250" height="140" fill="#241d14" opacity="0.16"/>
<ellipse cx="513.6" cy="244.4" rx="8" ry="7" fill="#d9bd62"/>
<circle cx="513.6" cy="244.70000000000002" r="5.3" fill="#0b0907"/>
<circle cx="512.1" cy="242.4" r="1.2" fill="#fff" opacity="0.8"/>
<ellipse cx="653.3" cy="245.8" rx="8" ry="7" fill="#d9bd62"/>
<circle cx="653.3" cy="246.10000000000002" r="5.3" fill="#0b0907"/>
<circle cx="651.8" cy="243.8" r="1.2" fill="#fff" opacity="0.8"/>
<path d="M-3.5,0 Q-3.5,7.2 0,13.0 Q3.5,7.2 3.5,0 Z" transform="translate(532.0,397.0) rotate(10)" fill="#e2d9b6" stroke="#6d6248" stroke-width="0.5"/>
<path d="M-4.0,0 Q-4.0,8.2 0,15.0 Q4.0,8.2 4.0,0 Z" transform="translate(544.0,392.0) rotate(6)" fill="#e2d9b6" stroke="#6d6248" stroke-width="0.5"/>
<path d="M-4.5,0 Q-4.5,9.4 0,17.0 Q4.5,9.4 4.5,0 Z" transform="translate(557.0,388.0) rotate(3)" fill="#e2d9b6" stroke="#6d6248" stroke-width="0.5"/>
<path d="M-5.0,0 Q-5.0,11.0 0,20.0 Q5.0,11.0 5.0,0 Z" transform="translate(571.0,386.0) rotate(1)" fill="#e2d9b6" stroke="#6d6248" stroke-width="0.5"/>
<path d="M-4.5,0 Q-4.5,8.2 0,15.0 Q4.5,8.2 4.5,0 Z" transform="translate(587.0,386.0) rotate(0)" fill="#e2d9b6" stroke="#6d6248" stroke-width="0.5"/>
<path d="M-4.8,0 Q-4.8,9.9 0,18.0 Q4.8,9.9 4.8,0 Z" transform="translate(602.0,386.0) rotate(-1)" fill="#e2d9b6" stroke="#6d6248" stroke-width="0.5"/>
<path d="M-4.2,0 Q-4.2,8.8 0,16.0 Q4.2,8.8 4.2,0 Z" transform="translate(615.0,388.0) rotate(-3)" fill="#e2d9b6" stroke="#6d6248" stroke-width="0.5"/>
<path d="M-4.0,0 Q-4.0,7.7 0,14.0 Q4.0,7.7 4.0,0 Z" transform="translate(628.0,392.0) rotate(-6)" fill="#e2d9b6" stroke="#6d6248" stroke-width="0.5"/>
<path d="M-3.5,0 Q-3.5,6.6 0,12.0 Q3.5,6.6 3.5,0 Z" transform="translate(640.0,397.0) rotate(-10)" fill="#e2d9b6" stroke="#6d6248" stroke-width="0.5"/>
</g>
<linearGradient id="gBody" x1="0" y1="370" x2="0" y2="500" gradientUnits="userSpaceOnUse">
<stop offset="0" stop-color="#3a3024"/><stop offset="0.25" stop-color="#5c503a"/><stop offset="0.7" stop-color="#6e6045"/><stop offset="1" stop-color="#443a2a"/></linearGradient>
<linearGradient id="gTail" x1="0" y1="400" x2="0" y2="480" gradientUnits="userSpaceOnUse">
<stop offset="0" stop-color="#3d2f22"/><stop offset="0.35" stop-color="#5a4934"/><stop offset="0.7" stop-color="#8a774c"/><stop offset="1" stop-color="#473b28"/></linearGradient>
<path d="M1024.0,478.0 C1015.9,480.9 1027.5,494.4 1029.0,502.0 C1030.5,509.6 1032.6,526.2 1035.0,535.0 C1037.4,543.8 1044.7,560.3 1047.0,568.0 C1049.3,575.7 1052.9,587.9 1052.0,593.0 C1051.1,598.1 1043.3,603.2 1040.0,606.0 C1036.7,608.8 1031.7,612.1 1027.0,614.0 C1022.3,615.9 1009.5,618.8 1005.0,620.0 C1000.5,621.2 995.7,621.4 993.0,623.0 C990.3,624.6 986.2,629.6 985.0,632.0 C983.8,634.4 982.0,639.5 984.0,641.0 C986.0,642.5 992.1,642.8 1000.0,643.0 C1007.9,643.2 1035.5,644.1 1043.0,642.5 C1050.5,640.9 1052.7,635.3 1056.0,631.0 C1059.3,626.7 1065.5,616.1 1068.0,610.0 C1070.5,603.9 1073.8,591.7 1075.0,585.0 C1076.2,578.3 1075.7,567.7 1077.0,560.0 C1078.3,552.3 1083.3,537.7 1085.0,527.0 C1086.7,516.3 1098.1,486.5 1090.0,480.0 C1081.9,473.5 1032.1,475.1 1024.0,478.0 Z" fill="#4c402b" />
<clipPath id="tc6"><path d="M1024.0,478.0 C1015.9,480.9 1027.5,494.4 1029.0,502.0 C1030.5,509.6 1032.6,526.2 1035.0,535.0 C1037.4,543.8 1044.7,560.3 1047.0,568.0 C1049.3,575.7 1052.9,587.9 1052.0,593.0 C1051.1,598.1 1043.3,603.2 1040.0,606.0 C1036.7,608.8 1031.7,612.1 1027.0,614.0 C1022.3,615.9 1009.5,618.8 1005.0,620.0 C1000.5,621.2 995.7,621.4 993.0,623.0 C990.3,624.6 986.2,629.6 985.0,632.0 C983.8,634.4 982.0,639.5 984.0,641.0 C986.0,642.5 992.1,642.8 1000.0,643.0 C1007.9,643.2 1035.5,644.1 1043.0,642.5 C1050.5,640.9 1052.7,635.3 1056.0,631.0 C1059.3,626.7 1065.5,616.1 1068.0,610.0 C1070.5,603.9 1073.8,591.7 1075.0,585.0 C1076.2,578.3 1075.7,567.7 1077.0,560.0 C1078.3,552.3 1083.3,537.7 1085.0,527.0 C1086.7,516.3 1098.1,486.5 1090.0,480.0 C1081.9,473.5 1032.1,475.1 1024.0,478.0 Z"/></clipPath>
<g clip-path="url(#tc6)">
<path d="M1030.0,500.0 C1031.5,494.2 1041.7,490.0 1045.0,500.0 C1048.3,510.0 1047.8,544.0 1050.0,560.0 C1052.2,576.0 1059.7,587.7 1058.0,596.0 C1056.3,604.3 1042.0,614.3 1040.0,610.0 C1038.0,605.7 1046.7,582.5 1046.0,570.0 C1045.3,557.5 1038.7,546.7 1036.0,535.0 C1033.3,523.3 1028.5,505.8 1030.0,500.0 Z" fill="#3a3020" filter="url(#b3)" opacity="0.7"/>
<path d="M1062.0,530.0 C1064.0,522.5 1073.0,530.0 1074.0,540.0 C1075.0,550.0 1070.7,576.7 1068.0,590.0 C1065.3,603.3 1061.0,614.2 1058.0,620.0 C1055.0,625.8 1049.3,630.8 1050.0,625.0 C1050.7,619.2 1060.0,600.8 1062.0,585.0 C1064.0,569.2 1060.0,537.5 1062.0,530.0 Z" fill="#8d7e5a" filter="url(#b2)" opacity="0.7"/>
<rect x="975" y="470" width="120" height="180" fill="#2a2116" opacity="0.4"/>
<path d="M1040.0,520.0 C1041.7,526.7 1047.0,548.0 1050.0,560.0 C1053.0,572.0 1059.7,583.7 1058.0,592.0 C1056.3,600.3 1048.0,605.0 1040.0,610.0 C1032.0,615.0 1015.0,620.0 1010.0,622.0" fill="none" stroke="#a39468" stroke-width="2.5" opacity="0.55" filter="url(#b1)"/>
<path d="M1066.0,540.0 C1066.3,546.7 1069.3,568.0 1068.0,580.0 C1066.7,592.0 1062.7,603.0 1058.0,612.0 C1053.3,621.0 1043.0,630.3 1040.0,634.0" fill="none" stroke="#a39468" stroke-width="2" opacity="0.45" filter="url(#b1)"/>
</g>
<clipPath id="tc7"><path d="M1024.0,478.0 C1015.9,480.9 1027.5,494.4 1029.0,502.0 C1030.5,509.6 1032.6,526.2 1035.0,535.0 C1037.4,543.8 1044.7,560.3 1047.0,568.0 C1049.3,575.7 1052.9,587.9 1052.0,593.0 C1051.1,598.1 1043.3,603.2 1040.0,606.0 C1036.7,608.8 1031.7,612.1 1027.0,614.0 C1022.3,615.9 1009.5,618.8 1005.0,620.0 C1000.5,621.2 995.7,621.4 993.0,623.0 C990.3,624.6 986.2,629.6 985.0,632.0 C983.8,634.4 982.0,639.5 984.0,641.0 C986.0,642.5 992.1,642.8 1000.0,643.0 C1007.9,643.2 1035.5,644.1 1043.0,642.5 C1050.5,640.9 1052.7,635.3 1056.0,631.0 C1059.3,626.7 1065.5,616.1 1068.0,610.0 C1070.5,603.9 1073.8,591.7 1075.0,585.0 C1076.2,578.3 1075.7,567.7 1077.0,560.0 C1078.3,552.3 1083.3,537.7 1085.0,527.0 C1086.7,516.3 1098.1,486.5 1090.0,480.0 C1081.9,473.5 1032.1,475.1 1024.0,478.0 Z"/></clipPath><g clip-path="url(#tc7)" ><rect x="978" y="470" width="124" height="179" filter="url(#wrk2)" opacity="0.7"/></g>
<path d="M984.0,641.0 C983.3,639.2 984.7,634.3 986.0,632.0 C987.3,629.7 990.2,627.3 992.0,627.0 C993.8,626.7 996.3,627.7 997.0,630.0 C997.7,632.3 997.2,638.8 996.0,641.0 C994.8,643.2 992.0,643.0 990.0,643.0 C988.0,643.0 984.7,642.8 984.0,641.0 Z" fill="#34322e" />
<path d="M998.0,642.0 C996.7,640.7 999.5,635.8 1001.0,634.0 C1002.5,632.2 1005.3,630.8 1007.0,631.0 C1008.7,631.2 1010.7,633.2 1011.0,635.0 C1011.3,636.8 1011.2,640.8 1009.0,642.0 C1006.8,643.2 999.3,643.3 998.0,642.0 Z" fill="#34322e" />
<path d="M996.0,647.0 C996.3,645.8 998.8,644.5 1000.0,645.0 C1001.2,645.5 1003.3,648.8 1003.0,650.0 C1002.7,651.2 999.2,652.5 998.0,652.0 C996.8,651.5 995.7,648.2 996.0,647.0 Z" fill="#34322e" />
<path d="M936.0,455.0 C937.9,455.3 946.7,461.3 948.0,466.0 C949.3,470.7 947.3,485.5 946.0,490.0 C944.7,494.5 940.7,497.9 938.0,500.0 C935.3,502.1 929.9,504.8 926.0,506.0 C922.1,507.2 913.4,507.9 909.0,509.0 C904.6,510.1 896.1,512.4 893.0,514.0 C889.9,515.6 887.6,520.3 886.0,521.0 C884.4,521.7 881.7,520.5 881.0,519.0 C880.3,517.5 879.8,512.3 881.0,510.0 C882.2,507.7 886.4,503.6 890.0,502.0 C893.6,500.4 903.5,499.6 908.0,498.0 C912.5,496.4 920.8,492.7 924.0,490.0 C927.2,487.3 930.7,481.5 932.0,478.0 C933.3,474.5 933.5,467.1 934.0,464.0 C934.5,460.9 934.1,454.7 936.0,455.0 Z" fill="#493c29" />
<clipPath id="tc8"><path d="M936.0,455.0 C937.9,455.3 946.7,461.3 948.0,466.0 C949.3,470.7 947.3,485.5 946.0,490.0 C944.7,494.5 940.7,497.9 938.0,500.0 C935.3,502.1 929.9,504.8 926.0,506.0 C922.1,507.2 913.4,507.9 909.0,509.0 C904.6,510.1 896.1,512.4 893.0,514.0 C889.9,515.6 887.6,520.3 886.0,521.0 C884.4,521.7 881.7,520.5 881.0,519.0 C880.3,517.5 879.8,512.3 881.0,510.0 C882.2,507.7 886.4,503.6 890.0,502.0 C893.6,500.4 903.5,499.6 908.0,498.0 C912.5,496.4 920.8,492.7 924.0,490.0 C927.2,487.3 930.7,481.5 932.0,478.0 C933.3,474.5 933.5,467.1 934.0,464.0 C934.5,460.9 934.1,454.7 936.0,455.0 Z"/></clipPath><g clip-path="url(#tc8)" ><rect x="876" y="451" width="78" height="75" filter="url(#wrk)" opacity="0.45"/></g>
<path d="M880.0,512.0 C880.5,509.7 883.3,509.2 884.0,511.0 C884.7,512.8 884.5,520.7 884.0,523.0 C883.5,525.3 881.7,526.8 881.0,525.0 C880.3,523.2 879.5,514.3 880.0,512.0 Z" fill="#1f1c18" />
<path d="M879.0,505.0 C880.0,503.8 883.5,502.8 884.0,504.0 C884.5,505.2 883.0,510.8 882.0,512.0 C881.0,513.2 878.5,512.2 878.0,511.0 C877.5,509.8 878.0,506.2 879.0,505.0 Z" fill="#1f1c18" />
<path d="M873.0,326.0 C876.9,321.5 889.0,323.3 895.0,326.0 C901.0,328.7 912.0,340.0 918.0,346.0 C924.0,352.0 934.8,366.5 940.0,371.0 C945.2,375.5 951.8,379.7 957.0,380.0 C962.2,380.3 970.9,374.4 979.0,373.5 C987.1,372.6 1009.9,372.8 1018.0,373.5 C1026.1,374.2 1033.3,378.0 1040.0,379.0 C1046.7,380.0 1057.6,380.5 1068.0,381.0 C1078.4,381.5 1105.7,381.4 1118.0,383.0 C1130.3,384.6 1148.9,390.2 1160.0,393.0 C1171.1,395.8 1189.9,401.7 1201.0,404.0 C1212.1,406.3 1231.8,408.7 1243.0,410.0 C1254.2,411.3 1273.8,412.9 1285.0,414.0 C1296.2,415.1 1315.9,416.9 1327.0,418.0 C1338.1,419.1 1356.9,421.6 1368.0,422.5 C1379.1,423.4 1400.0,423.7 1410.0,424.6 C1420.0,425.5 1434.7,427.1 1443.0,429.0 C1451.3,430.9 1465.3,436.2 1472.0,439.0 C1478.7,441.8 1485.9,445.9 1493.0,450.0 C1500.1,454.1 1520.7,463.3 1525.0,470.0 C1529.3,476.7 1530.3,499.7 1525.0,500.0 C1519.7,500.3 1493.7,477.6 1485.0,472.5 C1476.3,467.4 1467.2,463.7 1460.0,462.0 C1452.8,460.3 1440.5,459.7 1431.0,460.0 C1421.5,460.3 1400.2,463.0 1389.0,464.0 C1377.8,465.0 1358.1,467.2 1347.0,467.5 C1335.9,467.8 1317.1,466.2 1306.0,466.0 C1294.9,465.8 1273.5,465.7 1264.0,466.0 C1254.5,466.3 1241.7,467.1 1235.0,468.0 C1228.3,468.9 1219.6,471.3 1214.0,472.5 C1208.4,473.7 1198.9,475.9 1193.0,477.0 C1187.1,478.1 1175.7,479.7 1170.0,481.0 C1164.3,482.3 1158.0,484.7 1150.0,487.0 C1142.0,489.3 1119.3,497.3 1110.0,498.0 C1100.7,498.7 1086.7,493.2 1080.0,492.0 C1073.3,490.8 1067.1,488.5 1060.0,489.0 C1052.9,489.5 1035.4,495.0 1027.0,495.5 C1018.6,496.0 1004.9,494.9 997.0,493.0 C989.1,491.1 974.3,484.3 968.0,481.0 C961.7,477.7 953.7,470.5 950.0,468.0 C946.3,465.5 942.8,464.3 940.0,462.0 C937.2,459.7 933.4,453.3 929.0,451.0 C924.6,448.7 913.0,446.4 907.0,445.0 C901.0,443.6 889.6,441.8 884.0,440.5 C878.4,439.2 868.2,440.4 865.0,435.0 C861.8,429.6 859.9,410.0 860.0,400.0 C860.1,390.0 864.3,369.9 866.0,360.0 C867.7,350.1 869.1,330.5 873.0,326.0 Z" fill="url(#gBody)" />
<clipPath id="tc9"><path d="M873.0,326.0 C876.9,321.5 889.0,323.3 895.0,326.0 C901.0,328.7 912.0,340.0 918.0,346.0 C924.0,352.0 934.8,366.5 940.0,371.0 C945.2,375.5 951.8,379.7 957.0,380.0 C962.2,380.3 970.9,374.4 979.0,373.5 C987.1,372.6 1009.9,372.8 1018.0,373.5 C1026.1,374.2 1033.3,378.0 1040.0,379.0 C1046.7,380.0 1057.6,380.5 1068.0,381.0 C1078.4,381.5 1105.7,381.4 1118.0,383.0 C1130.3,384.6 1148.9,390.2 1160.0,393.0 C1171.1,395.8 1189.9,401.7 1201.0,404.0 C1212.1,406.3 1231.8,408.7 1243.0,410.0 C1254.2,411.3 1273.8,412.9 1285.0,414.0 C1296.2,415.1 1315.9,416.9 1327.0,418.0 C1338.1,419.1 1356.9,421.6 1368.0,422.5 C1379.1,423.4 1400.0,423.7 1410.0,424.6 C1420.0,425.5 1434.7,427.1 1443.0,429.0 C1451.3,430.9 1465.3,436.2 1472.0,439.0 C1478.7,441.8 1485.9,445.9 1493.0,450.0 C1500.1,454.1 1520.7,463.3 1525.0,470.0 C1529.3,476.7 1530.3,499.7 1525.0,500.0 C1519.7,500.3 1493.7,477.6 1485.0,472.5 C1476.3,467.4 1467.2,463.7 1460.0,462.0 C1452.8,460.3 1440.5,459.7 1431.0,460.0 C1421.5,460.3 1400.2,463.0 1389.0,464.0 C1377.8,465.0 1358.1,467.2 1347.0,467.5 C1335.9,467.8 1317.1,466.2 1306.0,466.0 C1294.9,465.8 1273.5,465.7 1264.0,466.0 C1254.5,466.3 1241.7,467.1 1235.0,468.0 C1228.3,468.9 1219.6,471.3 1214.0,472.5 C1208.4,473.7 1198.9,475.9 1193.0,477.0 C1187.1,478.1 1175.7,479.7 1170.0,481.0 C1164.3,482.3 1158.0,484.7 1150.0,487.0 C1142.0,489.3 1119.3,497.3 1110.0,498.0 C1100.7,498.7 1086.7,493.2 1080.0,492.0 C1073.3,490.8 1067.1,488.5 1060.0,489.0 C1052.9,489.5 1035.4,495.0 1027.0,495.5 C1018.6,496.0 1004.9,494.9 997.0,493.0 C989.1,491.1 974.3,484.3 968.0,481.0 C961.7,477.7 953.7,470.5 950.0,468.0 C946.3,465.5 942.8,464.3 940.0,462.0 C937.2,459.7 933.4,453.3 929.0,451.0 C924.6,448.7 913.0,446.4 907.0,445.0 C901.0,443.6 889.6,441.8 884.0,440.5 C878.4,439.2 868.2,440.4 865.0,435.0 C861.8,429.6 859.9,410.0 860.0,400.0 C860.1,390.0 864.3,369.9 866.0,360.0 C867.7,350.1 869.1,330.5 873.0,326.0 Z"/></clipPath>
<g clip-path="url(#tc9)">
<rect x="1150" y="385" width="380" height="120" fill="url(#gTail)" opacity="0.95"/>
<path d="M1170.0,400.0 C1185.0,397.8 1233.3,408.7 1260.0,412.0 C1286.7,415.3 1318.3,416.0 1330.0,420.0 C1341.7,424.0 1343.3,434.3 1330.0,436.0 C1316.7,437.7 1276.7,431.8 1250.0,430.0 C1223.3,428.2 1183.3,430.0 1170.0,425.0 C1156.7,420.0 1155.0,402.2 1170.0,400.0 Z" fill="#5c3a34" filter="url(#b3)" opacity="0.6"/>
<path d="M1180.0,450.0 C1200.0,446.3 1260.0,448.8 1300.0,448.0 C1340.0,447.2 1391.7,444.3 1420.0,445.0 C1448.3,445.7 1470.0,449.8 1470.0,452.0 C1470.0,454.2 1448.3,456.3 1420.0,458.0 C1391.7,459.7 1340.0,460.0 1300.0,462.0 C1260.0,464.0 1200.0,472.0 1180.0,470.0 C1160.0,468.0 1160.0,453.7 1180.0,450.0 Z" fill="#b39c62" filter="url(#b3)" opacity="0.6"/>
<path d="M880.0,335.0 C884.2,325.8 895.8,337.5 905.0,345.0 C914.2,352.5 927.5,367.5 935.0,380.0 C942.5,392.5 950.8,410.0 950.0,420.0 C949.2,430.0 938.3,438.3 930.0,440.0 C921.7,441.7 908.3,436.7 900.0,430.0 C891.7,423.3 883.3,415.8 880.0,400.0 C876.7,384.2 875.8,344.2 880.0,335.0 Z" fill="#857654" filter="url(#b3)" opacity="0.7"/>
<path d="M873.0,326.0 C873.8,324.0 887.5,322.7 895.0,326.0 C902.5,329.3 910.5,338.5 918.0,346.0 C925.5,353.5 937.2,365.7 940.0,371.0 C942.8,376.3 939.7,380.5 935.0,378.0 C930.3,375.5 919.5,362.7 912.0,356.0 C904.5,349.3 896.5,343.0 890.0,338.0 C883.5,333.0 872.2,328.0 873.0,326.0 Z" fill="#3f3524" filter="url(#b2)" opacity="0.8"/>
<path d="M878.0,345.0 C881.0,336.7 889.8,344.5 896.0,350.0 C902.2,355.5 910.2,367.7 915.0,378.0 C919.8,388.3 925.0,402.3 925.0,412.0 C925.0,421.7 920.8,433.0 915.0,436.0 C909.2,439.0 896.2,436.0 890.0,430.0 C883.8,424.0 880.0,414.2 878.0,400.0 C876.0,385.8 875.0,353.3 878.0,345.0 Z" fill="#a89a74" filter="url(#b3)" opacity="0.75"/>
<path d="M884.0,352.0 C886.3,357.3 894.3,372.7 898.0,384.0 C901.7,395.3 904.7,414.0 906.0,420.0" fill="none" stroke="#3c3222" stroke-width="1.4" opacity="0.55" filter="url(#b1)"/>
<path d="M891.0,357.0 C893.3,362.5 901.3,378.8 905.0,390.0 C908.7,401.2 911.7,418.3 913.0,424.0" fill="none" stroke="#3c3222" stroke-width="1.4" opacity="0.55" filter="url(#b1)"/>
<path d="M898.0,362.0 C900.3,367.7 908.3,385.0 912.0,396.0 C915.7,407.0 918.7,422.7 920.0,428.0" fill="none" stroke="#3c3222" stroke-width="1.4" opacity="0.55" filter="url(#b1)"/>
<path d="M905.0,367.0 C907.3,372.8 915.3,391.2 919.0,402.0 C922.7,412.8 925.7,427.0 927.0,432.0" fill="none" stroke="#3c3222" stroke-width="1.4" opacity="0.55" filter="url(#b1)"/>
<path d="M912.0,372.0 C914.3,378.0 922.3,397.3 926.0,408.0 C929.7,418.7 932.7,431.3 934.0,436.0" fill="none" stroke="#3c3222" stroke-width="1.4" opacity="0.55" filter="url(#b1)"/>
<path d="M919.0,377.0 C921.3,383.2 929.3,403.5 933.0,414.0 C936.7,424.5 939.7,435.7 941.0,440.0" fill="none" stroke="#3c3222" stroke-width="1.4" opacity="0.55" filter="url(#b1)"/>
<path d="M960.0,400.0 C970.0,392.5 995.0,393.3 1010.0,395.0 C1025.0,396.7 1041.7,399.2 1050.0,410.0 C1058.3,420.8 1065.0,447.5 1060.0,460.0 C1055.0,472.5 1034.2,483.3 1020.0,485.0 C1005.8,486.7 986.7,477.5 975.0,470.0 C963.3,462.5 952.5,451.7 950.0,440.0 C947.5,428.3 950.0,407.5 960.0,400.0 Z" fill="#8a7c58" filter="url(#b6)" opacity="0.65"/>
<path d="M965.0,478.0 C969.2,482.0 989.2,489.0 1000.0,492.0 C1010.8,495.0 1019.7,496.7 1030.0,496.0 C1040.3,495.3 1056.3,492.3 1062.0,488.0 C1067.7,483.7 1071.0,471.0 1064.0,470.0 C1057.0,469.0 1034.8,482.3 1020.0,482.0 C1005.2,481.7 984.2,468.7 975.0,468.0 C965.8,467.3 960.8,474.0 965.0,478.0 Z" fill="#3b3121" filter="url(#b3)" opacity="0.85"/>
<path d="M940.0,372.0 C945.0,369.8 963.3,373.7 980.0,375.0 C996.7,376.3 1016.7,378.5 1040.0,380.0 C1063.3,381.5 1100.0,381.7 1120.0,384.0 C1140.0,386.3 1153.3,390.7 1160.0,394.0 C1166.7,397.3 1170.0,403.7 1160.0,404.0 C1150.0,404.3 1123.3,398.3 1100.0,396.0 C1076.7,393.7 1045.0,391.3 1020.0,390.0 C995.0,388.7 963.3,391.0 950.0,388.0 C936.7,385.0 935.0,374.2 940.0,372.0 Z" fill="#3d3323" filter="url(#b3)" opacity="0.8"/>
<rect x="855" y="320" width="680" height="190" filter="url(#wrk)" opacity="0.6"/>
<rect x="1150" y="390" width="380" height="110" filter="url(#wrkL)" opacity="0.3"/>
<rect x="1150" y="390" width="380" height="110" filter="url(#wrk2)" opacity="0.6"/>
</g>
<path d="M1060.0,402.0 C1065.1,396.9 1088.0,392.5 1100.0,392.0 C1112.0,391.5 1141.2,392.9 1150.0,398.0 C1158.8,403.1 1163.7,420.7 1166.0,430.0 C1168.3,439.3 1167.7,460.1 1167.0,468.0 C1166.3,475.9 1160.9,484.7 1161.0,489.0 C1161.1,493.3 1165.5,496.5 1168.0,500.0 C1170.5,503.5 1176.7,511.4 1180.0,515.0 C1183.3,518.6 1189.7,523.9 1193.0,527.0 C1196.3,530.1 1201.7,534.1 1205.0,538.0 C1208.3,541.9 1215.1,550.1 1218.0,556.0 C1220.9,561.9 1225.7,575.3 1227.0,582.0 C1228.3,588.7 1228.7,600.7 1228.0,606.0 C1227.3,611.3 1225.3,618.9 1222.0,622.0 C1218.7,625.1 1209.0,627.9 1203.0,629.5 C1197.0,631.1 1183.8,632.5 1177.0,634.0 C1170.2,635.5 1156.8,640.2 1152.0,641.0 C1147.2,641.8 1142.7,641.2 1141.0,640.0 C1139.3,638.8 1138.9,634.1 1139.0,632.0 C1139.1,629.9 1140.3,625.9 1142.0,624.0 C1143.7,622.1 1147.3,619.3 1152.0,618.0 C1156.7,616.7 1171.9,615.6 1177.0,614.0 C1182.1,612.4 1186.9,608.8 1190.0,606.0 C1193.1,603.2 1199.6,598.1 1200.0,593.0 C1200.4,587.9 1197.3,572.4 1193.0,568.0 C1188.7,563.6 1173.5,561.6 1168.0,560.0 C1162.5,558.4 1156.4,557.1 1152.0,556.0 C1147.6,554.9 1140.6,553.7 1135.0,552.0 C1129.4,550.3 1116.4,547.0 1110.0,543.0 C1103.6,539.0 1091.3,528.1 1087.0,522.0 C1082.7,515.9 1080.5,505.3 1078.0,497.0 C1075.5,488.7 1070.1,468.9 1068.0,460.0 C1065.9,451.1 1063.1,437.7 1062.0,430.0 C1060.9,422.3 1054.9,407.1 1060.0,402.0 Z" fill="#625539" />
<clipPath id="tc10"><path d="M1060.0,402.0 C1065.1,396.9 1088.0,392.5 1100.0,392.0 C1112.0,391.5 1141.2,392.9 1150.0,398.0 C1158.8,403.1 1163.7,420.7 1166.0,430.0 C1168.3,439.3 1167.7,460.1 1167.0,468.0 C1166.3,475.9 1160.9,484.7 1161.0,489.0 C1161.1,493.3 1165.5,496.5 1168.0,500.0 C1170.5,503.5 1176.7,511.4 1180.0,515.0 C1183.3,518.6 1189.7,523.9 1193.0,527.0 C1196.3,530.1 1201.7,534.1 1205.0,538.0 C1208.3,541.9 1215.1,550.1 1218.0,556.0 C1220.9,561.9 1225.7,575.3 1227.0,582.0 C1228.3,588.7 1228.7,600.7 1228.0,606.0 C1227.3,611.3 1225.3,618.9 1222.0,622.0 C1218.7,625.1 1209.0,627.9 1203.0,629.5 C1197.0,631.1 1183.8,632.5 1177.0,634.0 C1170.2,635.5 1156.8,640.2 1152.0,641.0 C1147.2,641.8 1142.7,641.2 1141.0,640.0 C1139.3,638.8 1138.9,634.1 1139.0,632.0 C1139.1,629.9 1140.3,625.9 1142.0,624.0 C1143.7,622.1 1147.3,619.3 1152.0,618.0 C1156.7,616.7 1171.9,615.6 1177.0,614.0 C1182.1,612.4 1186.9,608.8 1190.0,606.0 C1193.1,603.2 1199.6,598.1 1200.0,593.0 C1200.4,587.9 1197.3,572.4 1193.0,568.0 C1188.7,563.6 1173.5,561.6 1168.0,560.0 C1162.5,558.4 1156.4,557.1 1152.0,556.0 C1147.6,554.9 1140.6,553.7 1135.0,552.0 C1129.4,550.3 1116.4,547.0 1110.0,543.0 C1103.6,539.0 1091.3,528.1 1087.0,522.0 C1082.7,515.9 1080.5,505.3 1078.0,497.0 C1075.5,488.7 1070.1,468.9 1068.0,460.0 C1065.9,451.1 1063.1,437.7 1062.0,430.0 C1060.9,422.3 1054.9,407.1 1060.0,402.0 Z"/></clipPath>
<g clip-path="url(#tc10)">
<path d="M1060.0,402.0 C1060.3,390.7 1068.7,395.7 1072.0,402.0 C1075.3,408.3 1076.7,424.5 1080.0,440.0 C1083.3,455.5 1088.7,480.0 1092.0,495.0 C1095.3,510.0 1101.3,525.2 1100.0,530.0 C1098.7,534.8 1089.0,534.0 1084.0,524.0 C1079.0,514.0 1074.0,490.3 1070.0,470.0 C1066.0,449.7 1059.7,413.3 1060.0,402.0 Z" fill="#3a3020" filter="url(#b3)" opacity="0.8"/>
<path d="M1100.0,420.0 C1107.0,411.7 1130.0,413.3 1140.0,420.0 C1150.0,426.7 1158.3,443.3 1160.0,460.0 C1161.7,476.7 1157.5,510.0 1150.0,520.0 C1142.5,530.0 1123.7,528.3 1115.0,520.0 C1106.3,511.7 1100.5,486.7 1098.0,470.0 C1095.5,453.3 1093.0,428.3 1100.0,420.0 Z" fill="#8f8059" filter="url(#b6)" opacity="0.65"/>
<path d="M1090.0,520.0 C1091.7,518.7 1107.0,534.2 1120.0,540.0 C1133.0,545.8 1154.7,550.0 1168.0,555.0 C1181.3,560.0 1194.7,565.0 1200.0,570.0 C1205.3,575.0 1206.7,585.8 1200.0,585.0 C1193.3,584.2 1175.0,571.2 1160.0,565.0 C1145.0,558.8 1121.7,555.5 1110.0,548.0 C1098.3,540.5 1088.3,521.3 1090.0,520.0 Z" fill="#3a3020" filter="url(#b3)" opacity="0.8"/>
<path d="M1185.0,520.0 C1186.7,518.2 1203.8,534.2 1210.0,545.0 C1216.2,555.8 1221.2,573.8 1222.0,585.0 C1222.8,596.2 1217.3,611.2 1215.0,612.0 C1212.7,612.8 1210.5,599.3 1208.0,590.0 C1205.5,580.7 1203.8,567.7 1200.0,556.0 C1196.2,544.3 1183.3,521.8 1185.0,520.0 Z" fill="#9a8b63" filter="url(#b2)" opacity="0.75"/>
<rect x="1130" y="540" width="110" height="110" fill="#2a2116" opacity="0.4"/>
<path d="M1196.0,545.0 C1198.0,550.0 1205.7,565.8 1208.0,575.0 C1210.3,584.2 1212.0,593.2 1210.0,600.0 C1208.0,606.8 1202.7,612.0 1196.0,616.0 C1189.3,620.0 1174.3,622.7 1170.0,624.0" fill="none" stroke="#b0a070" stroke-width="2.5" opacity="0.55" filter="url(#b1)"/>
<path d="M1070.0,420.0 C1072.0,428.3 1077.3,454.2 1082.0,470.0 C1086.7,485.8 1090.0,503.3 1098.0,515.0 C1106.0,526.7 1124.7,535.8 1130.0,540.0" fill="none" stroke="#2a2116" stroke-width="5" opacity="0.5" filter="url(#b2)"/>
<path d="M1120.0,400.0 C1122.5,406.7 1131.7,425.0 1135.0,440.0 C1138.3,455.0 1140.8,475.0 1140.0,490.0 C1139.2,505.0 1131.7,523.3 1130.0,530.0" fill="none" stroke="#2a2116" stroke-width="3" opacity="0.4" filter="url(#b2)"/>
<rect x="1055" y="388" width="180" height="260" filter="url(#wrk)" opacity="0.55"/>
<rect x="1055" y="388" width="180" height="260" filter="url(#wrk2)" opacity="0.45"/>
</g>
<path d="M1140.0,641.0 C1139.3,638.8 1140.0,633.0 1141.0,630.0 C1142.0,627.0 1144.3,623.7 1146.0,623.0 C1147.7,622.3 1150.3,623.2 1151.0,626.0 C1151.7,628.8 1151.0,637.2 1150.0,640.0 C1149.0,642.8 1146.7,642.8 1145.0,643.0 C1143.3,643.2 1140.7,643.2 1140.0,641.0 Z" fill="#34322e" />
<path d="M1152.0,640.0 C1150.7,638.3 1152.7,632.2 1154.0,630.0 C1155.3,627.8 1158.3,626.7 1160.0,627.0 C1161.7,627.3 1163.7,629.8 1164.0,632.0 C1164.3,634.2 1164.0,638.7 1162.0,640.0 C1160.0,641.3 1153.3,641.7 1152.0,640.0 Z" fill="#34322e" />
<path d="M1222.0,596.0 C1223.2,595.0 1227.3,597.7 1228.0,600.0 C1228.7,602.3 1227.2,609.0 1226.0,610.0 C1224.8,611.0 1221.7,608.3 1221.0,606.0 C1220.3,603.7 1220.8,597.0 1222.0,596.0 Z" fill="#26221c" />
<path d="M946.0,447.0 C948.1,444.7 956.4,445.8 960.0,447.0 C963.6,448.2 971.7,452.4 973.0,456.0 C974.3,459.6 971.1,470.0 970.0,474.0 C968.9,478.0 967.1,482.0 965.0,486.0 C962.9,490.0 956.5,500.5 954.0,504.0 C951.5,507.5 948.4,509.7 946.0,512.0 C943.6,514.3 938.5,518.6 936.0,521.0 C933.5,523.4 929.1,527.9 927.0,530.0 C924.9,532.1 921.6,536.3 920.0,537.0 C918.4,537.7 915.5,536.2 915.0,535.0 C914.5,533.8 915.3,530.3 916.0,528.0 C916.7,525.7 917.7,520.5 920.0,518.0 C922.3,515.5 930.1,511.9 933.0,509.0 C935.9,506.1 940.5,499.9 942.0,496.0 C943.5,492.1 943.7,484.3 944.0,480.0 C944.3,475.7 943.7,468.4 944.0,464.0 C944.3,459.6 943.9,449.3 946.0,447.0 Z" fill="#54452f" />
<clipPath id="tc11"><path d="M946.0,447.0 C948.1,444.7 956.4,445.8 960.0,447.0 C963.6,448.2 971.7,452.4 973.0,456.0 C974.3,459.6 971.1,470.0 970.0,474.0 C968.9,478.0 967.1,482.0 965.0,486.0 C962.9,490.0 956.5,500.5 954.0,504.0 C951.5,507.5 948.4,509.7 946.0,512.0 C943.6,514.3 938.5,518.6 936.0,521.0 C933.5,523.4 929.1,527.9 927.0,530.0 C924.9,532.1 921.6,536.3 920.0,537.0 C918.4,537.7 915.5,536.2 915.0,535.0 C914.5,533.8 915.3,530.3 916.0,528.0 C916.7,525.7 917.7,520.5 920.0,518.0 C922.3,515.5 930.1,511.9 933.0,509.0 C935.9,506.1 940.5,499.9 942.0,496.0 C943.5,492.1 943.7,484.3 944.0,480.0 C944.3,475.7 943.7,468.4 944.0,464.0 C944.3,459.6 943.9,449.3 946.0,447.0 Z"/></clipPath>
<g clip-path="url(#tc11)">
<path d="M952.0,450.0 C954.0,445.7 959.0,447.0 960.0,452.0 C961.0,457.0 960.0,472.0 958.0,480.0 C956.0,488.0 951.0,496.7 948.0,500.0 C945.0,503.3 940.0,503.7 940.0,500.0 C940.0,496.3 946.0,486.3 948.0,478.0 C950.0,469.7 950.0,454.3 952.0,450.0 Z" fill="#3a3020" filter="url(#b2)" opacity="0.7"/>
</g>
<clipPath id="tc12"><path d="M946.0,447.0 C948.1,444.7 956.4,445.8 960.0,447.0 C963.6,448.2 971.7,452.4 973.0,456.0 C974.3,459.6 971.1,470.0 970.0,474.0 C968.9,478.0 967.1,482.0 965.0,486.0 C962.9,490.0 956.5,500.5 954.0,504.0 C951.5,507.5 948.4,509.7 946.0,512.0 C943.6,514.3 938.5,518.6 936.0,521.0 C933.5,523.4 929.1,527.9 927.0,530.0 C924.9,532.1 921.6,536.3 920.0,537.0 C918.4,537.7 915.5,536.2 915.0,535.0 C914.5,533.8 915.3,530.3 916.0,528.0 C916.7,525.7 917.7,520.5 920.0,518.0 C922.3,515.5 930.1,511.9 933.0,509.0 C935.9,506.1 940.5,499.9 942.0,496.0 C943.5,492.1 943.7,484.3 944.0,480.0 C944.3,475.7 943.7,468.4 944.0,464.0 C944.3,459.6 943.9,449.3 946.0,447.0 Z"/></clipPath><g clip-path="url(#tc12)" ><rect x="910" y="441" width="68" height="101" filter="url(#wrk)" opacity="0.45"/></g>
<path d="M914.0,530.0 C915.0,528.3 918.5,529.3 919.0,531.0 C919.5,532.7 918.0,538.3 917.0,540.0 C916.0,541.7 913.5,542.7 913.0,541.0 C912.5,539.3 913.0,531.7 914.0,530.0 Z" fill="#1f1c18" />
<path d="M790.0,372.0 C794.8,370.8 824.0,371.0 832.0,371.0 C840.0,371.0 846.5,370.8 850.0,372.0 C853.5,373.2 858.3,377.3 858.0,380.0 C857.7,382.7 851.2,389.1 848.0,392.0 C844.8,394.9 838.0,398.9 834.0,402.0 C830.0,405.1 822.5,411.8 818.0,415.0 C813.5,418.2 804.3,423.7 800.0,426.0 C795.7,428.3 788.4,432.1 786.0,432.0 C783.6,431.9 781.5,427.9 782.0,425.0 C782.5,422.1 787.6,414.0 790.0,410.0 C792.4,406.0 799.2,399.0 800.0,395.0 C800.8,391.0 797.3,383.1 796.0,380.0 C794.7,376.9 785.2,373.2 790.0,372.0 Z" fill="#561419" />
<path d="M778.0,409.0 C779.3,407.2 791.3,405.2 800.0,402.0 C808.7,398.8 824.3,391.0 830.0,390.0 C835.7,389.0 834.7,393.7 834.0,396.0 C833.3,398.3 830.3,401.3 826.0,404.0 C821.7,406.7 813.7,410.5 808.0,412.0 C802.3,413.5 797.0,413.5 792.0,413.0 C787.0,412.5 776.7,410.8 778.0,409.0 Z" fill="#b25a64" />
<path d="M832.0,371.0 C836.3,369.0 852.0,372.8 856.0,376.0 C860.0,379.2 857.7,386.3 856.0,390.0 C854.3,393.7 849.3,396.3 846.0,398.0 C842.7,399.7 838.7,401.7 836.0,400.0 C833.3,398.3 830.7,392.8 830.0,388.0 C829.3,383.2 827.7,373.0 832.0,371.0 Z" fill="#bb6a72" />
<path d="M786.0,432.0 C787.7,432.7 794.7,428.8 800.0,426.0 C805.3,423.2 813.7,418.0 818.0,415.0 C822.3,412.0 825.3,409.8 826.0,408.0 C826.7,406.2 825.7,403.0 822.0,404.0 C818.3,405.0 809.3,411.0 804.0,414.0 C798.7,417.0 793.0,419.0 790.0,422.0 C787.0,425.0 784.3,431.3 786.0,432.0 Z" fill="#b8606a" />
<path d="M782.0,410.0 C785.0,409.2 792.3,407.8 800.0,405.0 C807.7,402.2 823.3,395.0 828.0,393.0" fill="none" stroke="#7a2f38" stroke-width="1.6" opacity="0.8"/>
<path d="M777.5,434.0 C776.6,435.6 778.4,441.7 779.0,444.0 C779.6,446.3 779.7,449.3 782.0,451.0 C784.3,452.7 790.5,457.5 796.0,457.0 C801.5,456.5 815.7,449.5 823.0,447.0 C830.3,444.5 845.1,440.1 851.0,438.0 C856.9,435.9 863.5,434.7 867.0,431.0 C870.5,427.3 875.4,416.8 877.0,410.0 C878.6,403.2 879.5,385.1 879.0,380.0 C878.5,374.9 875.9,372.1 873.0,372.0 C870.1,371.9 860.3,376.6 857.0,379.0 C853.7,381.4 851.1,387.1 848.0,390.0 C844.9,392.9 838.0,397.7 834.0,401.0 C830.0,404.3 822.5,411.7 818.0,415.0 C813.5,418.3 804.3,423.7 800.0,426.0 C795.7,428.3 789.0,430.9 786.0,432.0 C783.0,433.1 778.4,432.4 777.5,434.0 Z" fill="#7b614b" />
<clipPath id="tc13"><path d="M777.5,434.0 C776.6,435.6 778.4,441.7 779.0,444.0 C779.6,446.3 779.7,449.3 782.0,451.0 C784.3,452.7 790.5,457.5 796.0,457.0 C801.5,456.5 815.7,449.5 823.0,447.0 C830.3,444.5 845.1,440.1 851.0,438.0 C856.9,435.9 863.5,434.7 867.0,431.0 C870.5,427.3 875.4,416.8 877.0,410.0 C878.6,403.2 879.5,385.1 879.0,380.0 C878.5,374.9 875.9,372.1 873.0,372.0 C870.1,371.9 860.3,376.6 857.0,379.0 C853.7,381.4 851.1,387.1 848.0,390.0 C844.9,392.9 838.0,397.7 834.0,401.0 C830.0,404.3 822.5,411.7 818.0,415.0 C813.5,418.3 804.3,423.7 800.0,426.0 C795.7,428.3 789.0,430.9 786.0,432.0 C783.0,433.1 778.4,432.4 777.5,434.0 Z"/></clipPath><g clip-path="url(#tc13)" ><rect x="773" y="368" width="111" height="94" filter="url(#spotsL)" opacity="0.55"/></g>
<clipPath id="tc14"><path d="M777.5,434.0 C776.6,435.6 778.4,441.7 779.0,444.0 C779.6,446.3 779.7,449.3 782.0,451.0 C784.3,452.7 790.5,457.5 796.0,457.0 C801.5,456.5 815.7,449.5 823.0,447.0 C830.3,444.5 845.1,440.1 851.0,438.0 C856.9,435.9 863.5,434.7 867.0,431.0 C870.5,427.3 875.4,416.8 877.0,410.0 C878.6,403.2 879.5,385.1 879.0,380.0 C878.5,374.9 875.9,372.1 873.0,372.0 C870.1,371.9 860.3,376.6 857.0,379.0 C853.7,381.4 851.1,387.1 848.0,390.0 C844.9,392.9 838.0,397.7 834.0,401.0 C830.0,404.3 822.5,411.7 818.0,415.0 C813.5,418.3 804.3,423.7 800.0,426.0 C795.7,428.3 789.0,430.9 786.0,432.0 C783.0,433.1 778.4,432.4 777.5,434.0 Z"/></clipPath>
<g clip-path="url(#tc14)"><path d="M782.0,451.0 C783.0,452.2 789.2,457.8 796.0,457.0 C802.8,456.2 813.8,449.8 823.0,446.0 C832.2,442.2 844.0,437.8 851.0,434.5 C858.0,431.2 863.2,428.4 865.0,426.0 C866.8,423.6 866.2,419.0 862.0,420.0 C857.8,421.0 848.7,427.7 840.0,432.0 C831.3,436.3 818.3,443.0 810.0,446.0 C801.7,449.0 794.7,449.2 790.0,450.0 C785.3,450.8 781.0,449.8 782.0,451.0 Z" fill="#3d2e22" filter="url(#b2)" opacity="0.8"/></g>
<path d="M762.0,346.0 C762.1,344.1 762.9,340.3 764.0,338.0 C765.1,335.7 768.2,331.0 770.6,329.0 C773.0,327.0 778.7,324.3 782.0,323.0 C785.3,321.7 791.6,319.7 795.6,319.0 C799.6,318.3 808.3,318.1 812.0,318.0 C815.7,317.9 820.4,318.3 823.0,318.0 C825.6,317.7 828.8,315.5 831.7,315.6 C834.6,315.7 841.0,317.8 845.0,319.0 C849.0,320.2 858.3,323.0 862.0,324.7 C865.7,326.4 870.6,328.9 873.0,331.7 C875.4,334.5 878.8,342.0 880.0,346.0 C881.2,350.0 882.3,358.0 882.0,362.0 C881.7,366.0 880.1,373.6 878.0,376.0 C875.9,378.4 868.9,379.7 866.0,380.0 C863.1,380.3 858.7,379.1 856.0,378.0 C853.3,376.9 849.2,373.0 846.0,372.0 C842.8,371.0 835.7,370.3 831.7,370.6 C827.7,370.9 819.7,373.6 816.0,374.0 C812.3,374.4 807.2,374.0 804.0,373.3 C800.8,372.6 795.0,370.1 792.0,369.0 C789.0,367.9 784.4,366.3 781.7,365.0 C779.0,363.7 774.4,360.7 772.0,359.0 C769.6,357.3 764.9,354.2 763.6,352.5 C762.3,350.8 761.9,347.9 762.0,346.0 Z" fill="#6a5140" />
<clipPath id="tc15"><path d="M762.0,346.0 C762.1,344.1 762.9,340.3 764.0,338.0 C765.1,335.7 768.2,331.0 770.6,329.0 C773.0,327.0 778.7,324.3 782.0,323.0 C785.3,321.7 791.6,319.7 795.6,319.0 C799.6,318.3 808.3,318.1 812.0,318.0 C815.7,317.9 820.4,318.3 823.0,318.0 C825.6,317.7 828.8,315.5 831.7,315.6 C834.6,315.7 841.0,317.8 845.0,319.0 C849.0,320.2 858.3,323.0 862.0,324.7 C865.7,326.4 870.6,328.9 873.0,331.7 C875.4,334.5 878.8,342.0 880.0,346.0 C881.2,350.0 882.3,358.0 882.0,362.0 C881.7,366.0 880.1,373.6 878.0,376.0 C875.9,378.4 868.9,379.7 866.0,380.0 C863.1,380.3 858.7,379.1 856.0,378.0 C853.3,376.9 849.2,373.0 846.0,372.0 C842.8,371.0 835.7,370.3 831.7,370.6 C827.7,370.9 819.7,373.6 816.0,374.0 C812.3,374.4 807.2,374.0 804.0,373.3 C800.8,372.6 795.0,370.1 792.0,369.0 C789.0,367.9 784.4,366.3 781.7,365.0 C779.0,363.7 774.4,360.7 772.0,359.0 C769.6,357.3 764.9,354.2 763.6,352.5 C762.3,350.8 761.9,347.9 762.0,346.0 Z"/></clipPath>
<g clip-path="url(#tc15)">
<path d="M764.0,338.0 C765.0,335.3 774.0,325.5 782.0,322.0 C790.0,318.5 803.7,318.3 812.0,317.0 C820.3,315.7 823.7,313.0 832.0,314.0 C840.3,315.0 859.0,320.3 862.0,323.0 C865.0,325.7 856.0,329.5 850.0,330.0 C844.0,330.5 834.3,326.0 826.0,326.0 C817.7,326.0 808.3,328.0 800.0,330.0 C791.7,332.0 782.0,336.7 776.0,338.0 C770.0,339.3 763.0,340.7 764.0,338.0 Z" fill="#4b382b" filter="url(#b2)" opacity="0.85"/>
<path d="M838.0,330.0 C841.0,327.3 854.3,328.7 860.0,332.0 C865.7,335.3 872.0,343.3 872.0,350.0 C872.0,356.7 864.3,369.3 860.0,372.0 C855.7,374.7 849.0,370.0 846.0,366.0 C843.0,362.0 843.3,354.0 842.0,348.0 C840.7,342.0 835.0,332.7 838.0,330.0 Z" fill="#3d2d22" filter="url(#b2)" opacity="0.8"/>
<path d="M775.0,345.0 C777.3,341.3 790.8,340.0 800.0,340.0 C809.2,340.0 824.3,341.3 830.0,345.0 C835.7,348.7 837.3,358.2 834.0,362.0 C830.7,365.8 818.0,368.0 810.0,368.0 C802.0,368.0 791.8,365.8 786.0,362.0 C780.2,358.2 772.7,348.7 775.0,345.0 Z" fill="#856a54" filter="url(#b3)" opacity="0.7"/>
<rect x="758" y="312" width="130" height="72" filter="url(#blotch)" opacity="0.4"/>
</g>
<ellipse cx="847.5" cy="343" rx="5.2" ry="4" fill="#d8d05a"/><circle cx="847" cy="343" r="2.2" fill="#111"/>
<path d="M836.0,336.0 C837.7,335.8 842.3,334.3 846.0,335.0 C849.7,335.7 856.0,339.2 858.0,340.0" fill="none" stroke="#2a1e16" stroke-width="2.4" stroke-linecap="round"/>
<path d="M763.2,352 L765.3,360 L767,352 Z" fill="#efe8d2"/>
<path d="M767.2,355 L769.3,361.5 L771,355 Z" fill="#efe8d2"/>
<path d="M771.2,358 L773.3,364.5 L775,358 Z" fill="#efe8d2"/>
<path d="M775.2,361 L777.3,369 L779,361 Z" fill="#efe8d2"/>
<path d="M779.7,364 L781.8,370.5 L783.5,364 Z" fill="#efe8d2"/>
<path d="M784.2,366 L786.3,372.5 L788,366 Z" fill="#efe8d2"/>
<path d="M789.2,368 L791.3,376 L793,368 Z" fill="#efe8d2"/>
<path d="M794.2,370 L796.3,376.5 L798,370 Z" fill="#efe8d2"/>
<path d="M799.2,372 L801.3,378.5 L803,372 Z" fill="#efe8d2"/>
<path d="M804.2,372.5 L806.3,380.5 L808,372.5 Z" fill="#efe8d2"/>
<path d="M809.2,373 L811.3,379.5 L813,373 Z" fill="#efe8d2"/>
<path d="M814.2,373 L816.3,379.5 L818,373 Z" fill="#efe8d2"/>
<path d="M819.2,372 L821.3,380 L823,372 Z" fill="#efe8d2"/>
<path d="M824.2,371 L826.3,377.5 L828,371 Z" fill="#efe8d2"/>
<path d="M777.4,435 L778.5,428.5 L780.8,434 Z" fill="#efe8d2"/>
<path d="M781.4,433 L782.5,426.5 L784.8,432 Z" fill="#efe8d2"/>
<path d="M785.4,431 L786.5,424.5 L788.8,430 Z" fill="#efe8d2"/>
<path d="M789.4,429 L790.5,422.5 L792.8,428 Z" fill="#efe8d2"/>
<path d="M793.4,427 L794.5,420.5 L796.8,426 Z" fill="#efe8d2"/>
<path d="M797.4,425 L798.5,418.5 L800.8,424 Z" fill="#efe8d2"/>
<path d="M801.4,423 L802.5,416.5 L804.8,422 Z" fill="#efe8d2"/>
<path d="M806.4,420 L807.5,413.5 L809.8,419 Z" fill="#efe8d2"/>
<path d="M811.4,417 L812.5,410.5 L814.8,416 Z" fill="#efe8d2"/>
<path d="M816.4,414 L817.5,407.5 L819.8,413 Z" fill="#efe8d2"/>
<path d="M1012.0,258.0 C1014.2,255.8 1023.6,261.8 1030.0,262.0 C1036.4,262.2 1047.5,258.2 1050.5,259.0 C1053.5,259.8 1050.3,264.2 1047.9,267.0 C1045.5,269.8 1039.7,273.2 1036.0,276.0 C1032.3,278.8 1028.7,281.7 1026.0,284.0 C1023.3,286.3 1021.5,291.5 1020.0,290.0 C1018.5,288.5 1018.3,280.3 1017.0,275.0 C1015.7,269.7 1009.8,260.2 1012.0,258.0 Z" fill="#c4686f" />
<path d="M1012.0,258.0 C1013.2,255.8 1020.0,258.3 1022.0,262.0 C1024.0,265.7 1024.5,275.3 1024.0,280.0 C1023.5,284.7 1020.5,290.8 1019.0,290.0 C1017.5,289.2 1016.2,280.3 1015.0,275.0 C1013.8,269.7 1010.8,260.2 1012.0,258.0 Z" fill="#8e3a42" opacity="0.7"/>
<path d="M1050.5,259.0 C1052.4,257.0 1058.9,253.7 1062.0,252.0 C1065.1,250.3 1071.3,247.2 1074.0,246.0 C1076.7,244.8 1080.1,241.9 1082.0,243.0 C1083.9,244.1 1086.6,250.8 1088.0,254.0 C1089.4,257.2 1092.2,263.8 1092.7,267.0 C1093.2,270.2 1092.4,275.5 1092.0,278.0 C1091.6,280.5 1091.7,282.5 1090.0,286.0 C1088.3,289.5 1083.7,299.5 1079.5,304.0 C1075.3,308.5 1064.7,315.7 1058.4,320.0 C1052.1,324.3 1039.0,332.1 1032.0,336.0 C1025.0,339.9 1011.9,346.4 1005.6,349.0 C999.3,351.6 989.0,355.2 984.5,355.6 C980.0,356.0 974.3,353.7 972.0,352.0 C969.7,350.3 966.9,345.0 967.3,343.0 C967.7,341.0 972.4,338.7 975.0,337.0 C977.6,335.3 982.9,333.8 987.0,330.5 C991.1,327.2 1001.7,316.9 1005.6,312.0 C1009.5,307.1 1013.7,297.0 1016.2,293.5 C1018.7,290.0 1021.4,287.9 1024.0,285.6 C1026.6,283.3 1032.8,278.5 1036.0,276.0 C1039.2,273.5 1046.0,269.3 1047.9,267.0 C1049.8,264.7 1048.6,261.0 1050.5,259.0 Z" fill="#9d9374" />
<clipPath id="tc16"><path d="M1050.5,259.0 C1052.4,257.0 1058.9,253.7 1062.0,252.0 C1065.1,250.3 1071.3,247.2 1074.0,246.0 C1076.7,244.8 1080.1,241.9 1082.0,243.0 C1083.9,244.1 1086.6,250.8 1088.0,254.0 C1089.4,257.2 1092.2,263.8 1092.7,267.0 C1093.2,270.2 1092.4,275.5 1092.0,278.0 C1091.6,280.5 1091.7,282.5 1090.0,286.0 C1088.3,289.5 1083.7,299.5 1079.5,304.0 C1075.3,308.5 1064.7,315.7 1058.4,320.0 C1052.1,324.3 1039.0,332.1 1032.0,336.0 C1025.0,339.9 1011.9,346.4 1005.6,349.0 C999.3,351.6 989.0,355.2 984.5,355.6 C980.0,356.0 974.3,353.7 972.0,352.0 C969.7,350.3 966.9,345.0 967.3,343.0 C967.7,341.0 972.4,338.7 975.0,337.0 C977.6,335.3 982.9,333.8 987.0,330.5 C991.1,327.2 1001.7,316.9 1005.6,312.0 C1009.5,307.1 1013.7,297.0 1016.2,293.5 C1018.7,290.0 1021.4,287.9 1024.0,285.6 C1026.6,283.3 1032.8,278.5 1036.0,276.0 C1039.2,273.5 1046.0,269.3 1047.9,267.0 C1049.8,264.7 1048.6,261.0 1050.5,259.0 Z"/></clipPath>
<g clip-path="url(#tc16)">
<path d="M1024.0,285.0 C1030.0,278.7 1042.7,270.8 1048.0,267.0 C1053.3,263.2 1054.0,259.8 1056.0,262.0 C1058.0,264.2 1061.0,273.7 1060.0,280.0 C1059.0,286.3 1054.0,294.7 1050.0,300.0 C1046.0,305.3 1041.0,309.3 1036.0,312.0 C1031.0,314.7 1024.0,317.2 1020.0,316.0 C1016.0,314.8 1011.3,310.2 1012.0,305.0 C1012.7,299.8 1018.0,291.3 1024.0,285.0 Z" fill="#2f2a1e" filter="url(#b2)" opacity="0.85"/>
<path d="M1060.0,275.0 C1065.5,269.0 1080.0,260.3 1085.0,262.0 C1090.0,263.7 1092.2,277.7 1090.0,285.0 C1087.8,292.3 1078.7,300.5 1072.0,306.0 C1065.3,311.5 1053.3,319.3 1050.0,318.0 C1046.7,316.7 1050.3,305.2 1052.0,298.0 C1053.7,290.8 1054.5,281.0 1060.0,275.0 Z" fill="#aaa080" filter="url(#b3)" opacity="0.7"/>
<path d="M970.0,350.0 C973.3,347.8 988.3,349.0 1000.0,345.0 C1011.7,341.0 1027.5,333.5 1040.0,326.0 C1052.5,318.5 1067.5,304.0 1075.0,300.0 C1082.5,296.0 1089.2,297.0 1085.0,302.0 C1080.8,307.0 1063.3,321.7 1050.0,330.0 C1036.7,338.3 1016.7,347.3 1005.0,352.0 C993.3,356.7 985.8,358.3 980.0,358.0 C974.2,357.7 966.7,352.2 970.0,350.0 Z" fill="#4a4230" filter="url(#b2)" opacity="0.8"/>
<rect x="960" y="238" width="140" height="122" filter="url(#peb)" opacity="0.45"/>
<rect x="960" y="238" width="140" height="122" filter="url(#spotsL)" opacity="0.45"/>
<circle cx="1030" cy="296" r="2.2" fill="#1a1712" opacity="0.85"/>
<circle cx="1036" cy="302" r="2" fill="#1a1712" opacity="0.85"/>
<circle cx="1042" cy="296" r="2.4" fill="#1a1712" opacity="0.85"/>
<circle cx="1038" cy="290" r="1.8" fill="#1a1712" opacity="0.85"/>
<circle cx="1046" cy="304" r="1.8" fill="#1a1712" opacity="0.85"/>
<circle cx="1028" cy="304" r="1.8" fill="#1a1712" opacity="0.85"/>
<circle cx="1050" cy="292" r="2" fill="#1a1712" opacity="0.85"/>
<circle cx="1034" cy="310" r="1.6" fill="#1a1712" opacity="0.85"/>
</g>
<path d="M981.0,334.0 C982.0,332.0 986.5,329.7 990.0,326.0 C993.5,322.3 998.5,317.0 1002.0,312.0 C1005.5,307.0 1008.7,299.7 1011.0,296.0 C1013.3,292.3 1014.7,290.3 1016.0,290.0 C1017.3,289.7 1019.7,291.0 1019.0,294.0 C1018.3,297.0 1014.8,303.3 1012.0,308.0 C1009.2,312.7 1005.3,318.0 1002.0,322.0 C998.7,326.0 995.0,329.3 992.0,332.0 C989.0,334.7 985.8,337.7 984.0,338.0 C982.2,338.3 980.0,336.0 981.0,334.0 Z" fill="#c9757c" />
<path d="M929.0,260.0 C928.9,257.3 929.3,250.9 930.0,248.0 C930.7,245.1 932.7,240.5 934.3,238.0 C935.9,235.5 939.5,231.1 942.0,229.0 C944.5,226.9 949.7,223.7 952.8,222.0 C955.9,220.3 961.5,217.4 965.0,216.0 C968.5,214.6 975.6,212.6 979.2,211.7 C982.8,210.8 988.5,209.7 992.0,209.0 C995.5,208.3 1002.8,207.2 1005.6,206.4 C1008.4,205.6 1011.2,204.1 1013.0,203.0 C1014.8,201.9 1017.0,199.8 1018.8,198.5 C1020.6,197.2 1024.3,194.2 1026.7,193.5 C1029.1,192.8 1034.2,192.9 1037.0,193.0 C1039.8,193.1 1044.8,194.0 1047.9,194.5 C1051.0,195.0 1056.8,196.1 1060.0,197.0 C1063.2,197.9 1069.4,199.4 1071.6,201.0 C1073.8,202.6 1076.1,207.0 1076.4,209.0 C1076.7,211.0 1074.6,214.3 1074.0,216.0 C1073.4,217.7 1071.2,219.9 1071.6,222.0 C1072.0,224.1 1075.6,229.5 1077.0,232.0 C1078.4,234.5 1082.9,238.7 1082.2,240.7 C1081.5,242.7 1075.0,245.2 1072.0,247.0 C1069.0,248.8 1062.9,252.4 1060.0,254.0 C1057.1,255.6 1054.0,257.9 1050.0,259.0 C1046.0,260.1 1035.2,262.0 1030.0,262.0 C1024.8,262.0 1014.9,258.7 1010.9,259.0 C1006.9,259.3 1002.5,262.9 1000.0,264.0 C997.5,265.1 995.1,266.4 992.4,267.5 C989.7,268.6 983.5,271.0 980.0,272.0 C976.5,273.0 969.7,274.7 966.0,275.0 C962.3,275.3 955.5,274.3 952.0,274.0 C948.5,273.7 942.4,273.2 939.6,272.4 C936.8,271.6 932.4,269.7 931.0,268.0 C929.6,266.3 929.1,262.7 929.0,260.0 Z" fill="#6a624a" />
<clipPath id="tc17"><path d="M929.0,260.0 C928.9,257.3 929.3,250.9 930.0,248.0 C930.7,245.1 932.7,240.5 934.3,238.0 C935.9,235.5 939.5,231.1 942.0,229.0 C944.5,226.9 949.7,223.7 952.8,222.0 C955.9,220.3 961.5,217.4 965.0,216.0 C968.5,214.6 975.6,212.6 979.2,211.7 C982.8,210.8 988.5,209.7 992.0,209.0 C995.5,208.3 1002.8,207.2 1005.6,206.4 C1008.4,205.6 1011.2,204.1 1013.0,203.0 C1014.8,201.9 1017.0,199.8 1018.8,198.5 C1020.6,197.2 1024.3,194.2 1026.7,193.5 C1029.1,192.8 1034.2,192.9 1037.0,193.0 C1039.8,193.1 1044.8,194.0 1047.9,194.5 C1051.0,195.0 1056.8,196.1 1060.0,197.0 C1063.2,197.9 1069.4,199.4 1071.6,201.0 C1073.8,202.6 1076.1,207.0 1076.4,209.0 C1076.7,211.0 1074.6,214.3 1074.0,216.0 C1073.4,217.7 1071.2,219.9 1071.6,222.0 C1072.0,224.1 1075.6,229.5 1077.0,232.0 C1078.4,234.5 1082.9,238.7 1082.2,240.7 C1081.5,242.7 1075.0,245.2 1072.0,247.0 C1069.0,248.8 1062.9,252.4 1060.0,254.0 C1057.1,255.6 1054.0,257.9 1050.0,259.0 C1046.0,260.1 1035.2,262.0 1030.0,262.0 C1024.8,262.0 1014.9,258.7 1010.9,259.0 C1006.9,259.3 1002.5,262.9 1000.0,264.0 C997.5,265.1 995.1,266.4 992.4,267.5 C989.7,268.6 983.5,271.0 980.0,272.0 C976.5,273.0 969.7,274.7 966.0,275.0 C962.3,275.3 955.5,274.3 952.0,274.0 C948.5,273.7 942.4,273.2 939.6,272.4 C936.8,271.6 932.4,269.7 931.0,268.0 C929.6,266.3 929.1,262.7 929.0,260.0 Z"/></clipPath>
<g clip-path="url(#tc17)">
<path d="M930.0,248.0 C931.0,243.5 936.2,234.3 942.0,229.0 C947.8,223.7 956.7,219.3 965.0,216.0 C973.3,212.7 984.0,211.2 992.0,209.0 C1000.0,206.8 1007.3,205.7 1013.0,203.0 C1018.7,200.3 1020.2,194.5 1026.0,193.0 C1031.8,191.5 1040.3,192.7 1048.0,194.0 C1055.7,195.3 1067.3,198.3 1072.0,201.0 C1076.7,203.7 1079.7,209.5 1076.0,210.0 C1072.3,210.5 1057.7,204.7 1050.0,204.0 C1042.3,203.3 1036.0,204.0 1030.0,206.0 C1024.0,208.0 1020.7,213.3 1014.0,216.0 C1007.3,218.7 998.2,220.0 990.0,222.0 C981.8,224.0 972.5,225.0 965.0,228.0 C957.5,231.0 949.8,235.3 945.0,240.0 C940.2,244.7 938.5,254.7 936.0,256.0 C933.5,257.3 929.0,252.5 930.0,248.0 Z" fill="#38352b" filter="url(#b2)" opacity="0.85"/>
<path d="M1012.0,212.0 C1014.3,208.7 1021.3,204.7 1026.0,204.0 C1030.7,203.3 1037.0,205.0 1040.0,208.0 C1043.0,211.0 1044.7,217.7 1044.0,222.0 C1043.3,226.3 1040.0,232.3 1036.0,234.0 C1032.0,235.7 1024.0,233.7 1020.0,232.0 C1016.0,230.3 1013.3,227.3 1012.0,224.0 C1010.7,220.7 1009.7,215.3 1012.0,212.0 Z" fill="#221f18" filter="url(#b1)" opacity="0.9"/>
<path d="M945.0,245.0 C949.2,240.0 960.8,234.8 970.0,232.0 C979.2,229.2 993.3,225.8 1000.0,228.0 C1006.7,230.2 1010.8,239.3 1010.0,245.0 C1009.2,250.7 1002.5,258.2 995.0,262.0 C987.5,265.8 973.3,268.0 965.0,268.0 C956.7,268.0 948.3,265.8 945.0,262.0 C941.7,258.2 940.8,250.0 945.0,245.0 Z" fill="#b3a883" filter="url(#b3)" opacity="0.85"/>
<path d="M1040.0,230.0 C1047.7,226.0 1059.7,220.3 1066.0,222.0 C1072.3,223.7 1079.7,234.7 1078.0,240.0 C1076.3,245.3 1064.0,251.0 1056.0,254.0 C1048.0,257.0 1036.0,259.3 1030.0,258.0 C1024.0,256.7 1018.3,250.7 1020.0,246.0 C1021.7,241.3 1032.3,234.0 1040.0,230.0 Z" fill="#4a4739" filter="url(#b3)" opacity="0.7"/>
<path d="M931.0,262.0 C934.3,261.7 942.7,267.0 950.0,268.0 C957.3,269.0 966.7,269.3 975.0,268.0 C983.3,266.7 995.8,260.0 1000.0,260.0 C1004.2,260.0 1004.2,265.2 1000.0,268.0 C995.8,270.8 983.7,275.5 975.0,277.0 C966.3,278.5 955.5,278.2 948.0,277.0 C940.5,275.8 932.8,272.5 930.0,270.0 C927.2,267.5 927.7,262.3 931.0,262.0 Z" fill="#39362b" filter="url(#b1)" opacity="0.8"/>
<rect x="925" y="190" width="162" height="90" filter="url(#blotch)" opacity="0.4"/>
</g>
<path d="M937.0,238.0 C937.3,236.7 942.0,233.5 944.0,233.0 C946.0,232.5 949.3,233.7 949.0,235.0 C948.7,236.3 944.0,240.5 942.0,241.0 C940.0,241.5 936.7,239.3 937.0,238.0 Z" fill="#15130f" />
<ellipse cx="1028" cy="219.3" rx="5.2" ry="4.2" fill="#d6cc52"/><ellipse cx="1029" cy="219" rx="2.6" ry="3" fill="#14120e"/>
<path d="M1014.0,214.0 C1016.0,213.3 1021.7,210.0 1026.0,210.0 C1030.3,210.0 1037.7,213.3 1040.0,214.0" fill="none" stroke="#1b1812" stroke-width="3" stroke-linecap="round"/>
<path d="M932.2,268.5 L934.4,275 L936,268.5 Z" fill="#e6dcb8"/>
<path d="M936.2,270.5 L938.4,279 L940,270.5 Z" fill="#e6dcb8"/>
<path d="M941.2,272.0 L943.4,281.5 L945,272.0 Z" fill="#e6dcb8"/>
<path d="M946.2,273.0 L948.4,281.5 L950,273.0 Z" fill="#e6dcb8"/>
<path d="M951.2,273.5 L953.4,284 L955,273.5 Z" fill="#e6dcb8"/>
<path d="M956.2,274.0 L958.4,283.5 L960,274.0 Z" fill="#e6dcb8"/>
<path d="M961.2,274.0 L963.4,284.5 L965,274.0 Z" fill="#e6dcb8"/>
<path d="M966.2,273.5 L968.4,283 L970,273.5 Z" fill="#e6dcb8"/>
<path d="M971.2,273.0 L973.4,284.5 L975,273.0 Z" fill="#e6dcb8"/>
<path d="M976.2,271.5 L978.4,280 L980,271.5 Z" fill="#e6dcb8"/>
<path d="M981.2,270.0 L983.4,277.5 L985,270.0 Z" fill="#e6dcb8"/>
<path d="M986.2,268.5 L988.4,275 L990,268.5 Z" fill="#e6dcb8"/>
<path d="M991.2,266.5 L993.4,272.5 L995,266.5 Z" fill="#e6dcb8"/>
<path d="M996.2,264.5 L998.4,270 L1000,264.5 Z" fill="#e6dcb8"/>
<path d="M968.4,342 L968.8,336 L971.8,341 Z" fill="#efe6c8"/>
<path d="M972.4,340 L972.8,334 L975.8,339 Z" fill="#efe6c8"/>
<path d="M976.4,338 L976.8,332 L979.8,337 Z" fill="#efe6c8"/>
<path d="M980.4,335 L980.8,329 L983.8,334 Z" fill="#efe6c8"/>
<path d="M984.4,332 L984.8,326 L987.8,331 Z" fill="#efe6c8"/>
<path d="M988.4,328 L988.8,322 L991.8,327 Z" fill="#efe6c8"/>
<path d="M992.4,324 L992.8,318 L995.8,323 Z" fill="#efe6c8"/>
<path d="M996.4,319 L996.8,313 L999.8,318 Z" fill="#efe6c8"/>
<path d="M1000.4,314 L1000.8,308 L1003.8,313 Z" fill="#efe6c8"/>
<rect x="478.25" y="186.5" width="689.5" height="458.75" fill="none" stroke="#1f5ea8" stroke-width="5.5"/>
</svg><!--/SCENE-->
<svg id="ui" width="1600" height="720" viewBox="0 0 1600 720">
<!-- add icon -->
<g fill="#ffb70a">
<circle cx="115.7" cy="110" r="29.2"/>
<rect x="150.6" y="105.6" width="14.3" height="7" />
<rect x="146.2" y="85.9" width="14.3" height="7" transform="rotate(-28 153.3 89.4)"/>
<rect x="146.2" y="125.5" width="14.3" height="7" transform="rotate(28 153.3 129)"/>
</g>
<g fill="#252530">
<rect x="99.4" y="106" width="32.5" height="9.3"/>
<rect x="111.4" y="95.7" width="9" height="30.7"/>
</g>
<!-- tween bars -->
<g fill="#00bcd4">
<rect x="93.1" y="214.8" width="5.3" height="66.1"/>
<rect x="106.3" y="214.8" width="10.3" height="66.1"/>
<rect x="123.3" y="214.8" width="12.6" height="66.1"/>
<rect x="147.8" y="214.8" width="14.8" height="66.1"/>
</g>

<!-- undo icon -->
<path d="M116.7,607.3 H127.7 A28.35,28.35 0 0 1 127.7,664 H116.7 V672.2 L96.2,655.3 L116.7,638.9 V647.5 H127.5 A12,12 0 0 0 127.5,623.5 H116.7 Z" fill="#64656c"/>
<!-- 撤销 faint -->
<g fill="none" stroke="#232c37" stroke-width="2.2" stroke-linecap="round" stroke-linejoin="round">
<path d="M101,689 V708 M97.5,694 H104 M97.5,703.5 H104 M107,693 H114 M110,688 V693 M107.5,696.5 H114 V709 M107.5,696.5 V709 M108,701 H113.5 M108,705 H113.5 M119,690 L117,697 M117,694 H124 M122,697 Q121,704 116.5,708 M118,699 Q120,705 124,708"/>
<path d="M132,689 L129.5,696 M131,692 H137 M130,698 H137 M129.5,703 H137 M133.5,698 V708 L137,706 M148,688 V695 M143.5,690 L145,694 M152.5,690 L151,694 M142.5,697 H153.5 V709 M142.5,697 V709 M143,701.5 H153 M143,705.5 H153"/>
</g>
<!-- 添加 -->
<g fill="none" stroke="#fdc21a" stroke-width="2.6" stroke-linecap="round" stroke-linejoin="round">
<path d="M99.6,164.9 L103.9,167.1 M99,171.5 L103,173.4 M99.8,182.2 L104.2,179"/>
<path d="M109.5,164 H120.3 M107.5,170 H122.5 M113.8,164.2 Q113.6,169 112.5,171 Q110.5,174 107.8,175.6 M117,170.5 L122.5,175.6"/>
<path d="M114.7,175 V182.6 Q114.5,184 113,184.6 M109.8,179 L108.8,181.9 M118.7,179.4 L119.1,181.5 M122.2,179 L123,181"/>
<path d="M128.5,168.7 H136.5 Q138.7,168.9 138.7,172 L138.4,183.7 M133.3,163.9 L133,175 Q132.6,180 130.8,183.2"/>
<rect x="144.1" y="167.4" width="8.8" height="15.5" rx="1.6"/>
</g>
<!-- status icons -->
<g id="sb">
<path d="M87.1,19.1 H97.6 L101,23.4 V36.8 H87.1 Z" fill="none" stroke="#fff" stroke-width="2" stroke-linejoin="round"/>
<path d="M91.2,26 L96.8,31.6 M96.8,26 L91.2,31.6" stroke="#fff" stroke-width="2" fill="none"/>
<rect x="111.9" y="18.1" width="20.1" height="19.7" rx="5.5" fill="#f4538a"/>
<path d="M115,30 l1.5,-4 l1.5,4 l1.5,-4 l1.5,4 l1.5,-4 l1.5,4 l1.5,-4 l1.5,4" stroke="#fff" stroke-width="1.5" fill="none" stroke-linejoin="round"/>
<path d="M115,32 h14" stroke="#ffd0e0" stroke-width="1" fill="none"/>
<path d="M117.5,21.5 l3,2 M126.5,21.5 l-3,2" stroke="#f98ab0" stroke-width="1" fill="none"/>
<rect x="145.2" y="25.1" width="13.6" height="9.6" rx="3" fill="none" stroke="#fff" stroke-width="2"/>
<path d="M147.3,20.4 L150,24.5 M156.7,20.4 L154,24.5" stroke="#fff" stroke-width="1.9" stroke-linecap="round" fill="none"/>
<path d="M150,27.2 L155,29.9 L150,32.4 Z" fill="#fff"/>
<rect x="171.9" y="18.1" width="20.1" height="19.7" rx="5" fill="#fff"/>
<path d="M178.4,23.6 L186.4,28 L178.4,32.4 Z" fill="#fff" stroke="#000" stroke-width="3" stroke-linejoin="round"/>
<g><rect x="202.2" y="18.1" width="19.6" height="19.7" rx="5" fill="#fff"/>
<path d="M205,22.6 H218.8 M205,28.4 H218.8" stroke="#000" stroke-width="2.6" fill="none"/>
<path d="M215.2,32.8 l2,2.2 l2,-2.2" stroke="#000" stroke-width="1.3" fill="none"/></g>
<g transform="translate(30,0)"><rect x="202.2" y="18.1" width="19.6" height="19.7" rx="5" fill="#fff"/>
<path d="M205,22.6 H218.8 M205,28.4 H218.8" stroke="#000" stroke-width="2.6" fill="none"/>
<path d="M215.2,32.8 l2,2.2 l2,-2.2" stroke="#000" stroke-width="1.3" fill="none"/></g>
<rect x="262" y="20.9" width="15" height="14.1" rx="2" fill="#fff"/>
<path d="M278.5,25.3 L282.3,22.6 V33.2 L278.5,31 Z" fill="#fff"/>
<path d="M266.7,25 L272.5,27.9 L266.7,30.8 Z" fill="#000"/>
<g fill="#fff" stroke="#000" stroke-width="0.9"><circle cx="297.3" cy="23.6" r="5.6"/><circle cx="306.9" cy="23.4" r="5.6"/><circle cx="306.9" cy="32.9" r="5.6"/><circle cx="297.3" cy="33" r="5.6"/></g>
<circle cx="297.3" cy="23.6" r="5.2" fill="#fff"/><circle cx="302.1" cy="28.2" r="3.2" fill="#fff"/>
<path d="M302.1,18.5 A5.6,5.6 0 0 0 302.1,28.4" fill="none" stroke="#000" stroke-width="0.9"/>
<rect x="329" y="18.1" width="5.8" height="3" rx="1" fill="#fff"/>
<rect x="325.1" y="20" width="13.5" height="17.8" rx="2" fill="#fff"/>
<rect x="327.2" y="21.9" width="9.4" height="4.6" rx="0.8" fill="#000"/>
<rect x="352" y="18.1" width="20.2" height="19.7" rx="5" fill="#fff"/>
<path d="M357.3,23.3 A4.7,4.7 0 0 0 366.7,23.3" fill="none" stroke="#000" stroke-width="2.3" stroke-linecap="round"/>
<rect x="382" y="18.1" width="20" height="19.7" rx="5" fill="#fff"/>
<circle cx="390.9" cy="29.3" r="3.2" fill="none" stroke="#000" stroke-width="2.8"/>
<path d="M394,27.5 L397.2,22 L393.5,23.3" fill="none" stroke="#000" stroke-width="2.2" stroke-linejoin="round"/>
<path d="M415,35.8 L412,23.8 L418.3,27.8 L422,19.3 L425.7,27.8 L432.2,23.8 L429,35.8 Z" fill="#fff"/>
<path d="M422,19.3 L416,35.8 M422,19.3 L428,35.8" stroke="#000" stroke-width="0.7" fill="none"/>
<path d="M445.2,21.8 L452,20.2 L458.9,21.8 V28 Q458.5,33 452,35.9 Q445.6,33 445.2,28 Z" fill="#fff"/>
<path d="M448.8,27.6 L451.2,30 L455.6,25.6" stroke="#000" stroke-width="1.4" fill="none"/>
<ellipse cx="481.5" cy="24" rx="6.3" ry="2.6" fill="#fff"/>
<path d="M475.2,24 V32 A6.3,2.6 0 0 0 487.8,32 V24 Z" fill="#fff"/>
<path d="M475.2,27 A6.3,2.4 0 0 0 487.8,27 M475.2,30.2 A6.3,2.4 0 0 0 487.8,30.2" stroke="#000" stroke-width="0.9" fill="none"/>
<path d="M484,28.5 L488.3,35 H479.7 Z" fill="#000"/><path d="M484,30.2 L486.8,34.3 H481.2 Z" fill="#fff"/>
<rect x="502.1" y="17.9" width="19.9" height="20" rx="5" fill="#fff"/>
<path d="M504.6,26.4 l1.6,3.2 l1.6,-3.2 M509.6,26.4 v3.2 M511.4,26.4 l1.6,3.2 l1.6,-3.2" stroke="#000" stroke-width="1" fill="none" stroke-linejoin="round"/><rect x="515.6" y="26.3" width="3.6" height="3.3" rx="1.2" fill="none" stroke="#000" stroke-width="1"/>
<path d="M532,21.5 Q537,19.8 541.6,21.6 V35.4 Q537,33.8 532,35.4 Z M552.2,21.5 Q547,19.8 542.6,21.6 V35.4 Q547,33.8 552.2,35.4 Z" fill="#fff"/>
<path d="M531.8,36.2 Q537,34.6 542,36.3 Q547,34.6 552.4,36.2" stroke="#fff" stroke-width="0.9" fill="none"/>
<path d="M535,21.2 V34.2 M549,21.2 V34.2" stroke="#000" stroke-width="0.5" fill="none" opacity="0.6"/>
<circle cx="576" cy="25" r="5.9" fill="#fff"/>
<path d="M566.5,37.2 a4.6,4.6 0 0 1 -0.4,-9.2 a6.6,6.6 0 0 1 12.6,-1.2 a5.3,5.3 0 0 1 -0.4,10.4 Z" fill="#fff" stroke="#000" stroke-width="1.2"/>
<path d="M566.5,37.2 a4.6,4.6 0 0 1 -0.4,-9.2 a6.6,6.6 0 0 1 12.6,-1.2 a5.3,5.3 0 0 1 -0.4,10.4 Z" fill="#fff"/>
</g>
<!-- right status -->
<g>
<rect x="1376.9" y="19" width="11.2" height="17.3" rx="2.2" fill="none" stroke="#fff" stroke-width="1.8"/>
<rect x="1379.3" y="21.5" width="6.4" height="12.2" fill="#8a8a8a"/>
<path d="M1373.6,24.2 V31.2 M1370.8,26 V29.6 M1391.4,24.2 V31.2 M1394.2,26 V29.6" stroke="#fff" stroke-width="1.6" fill="none" stroke-linecap="round"/>
<path d="M1404,23.6 A15,15 0 0 1 1426,23.6" stroke="#555" stroke-width="2.6" fill="none"/>
<path d="M1406.6,27.6 A11.5,11.5 0 0 1 1423.4,27.6 M1409.7,31 A7.3,7.3 0 0 1 1420.3,31" stroke="#fff" stroke-width="2.4" fill="none"/>
<path d="M1412.3,34.3 A3.8,3.8 0 0 1 1417.7,34.3 L1415,37.5 Z" fill="#fff"/>
<path d="M1424,32 L1426.2,28.8 L1428.4,32 Z" fill="#fff"/>
<rect x="1436.8" y="18.8" width="36.5" height="18.4" rx="4" fill="none" stroke="#fff" stroke-width="1.4"/>
<rect x="1439.2" y="21.2" width="9.8" height="13.6" rx="1.5" fill="#555"/>
<path d="M1475.8,25 V31" stroke="#fff" stroke-width="1.6" stroke-linecap="round" fill="none"/>
<text x="1450.6" y="31.5" font-family="Liberation Sans, sans-serif" font-weight="bold" font-size="9.6" fill="#fff">33</text>
</g>
<!-- right controls -->
<polygon points="1448.4,80.6 1464,80.6 1501.1,138.1 1494.7,152.2 1417.7,152.2 1410.9,138.1" fill="#ffeb3b"/>
<circle cx="1455.5" cy="210.8" r="11.1" fill="#29ecfd"/>
<polygon points="1417.7,624.9 1494,624.9 1501.1,638.6 1464,696 1448.4,696 1410.9,638.6" fill="#45c8fd"/>
<path d="M1409.3,374.3 H1413.6 V386" fill="none" stroke="#000" stroke-width="3" stroke-linecap="round" stroke-linejoin="round"/>
<path d="M1418.6,186.3 H1421.8 V194.8" fill="none" stroke="#22222c" stroke-width="1.9" stroke-linecap="round" stroke-linejoin="round"/>
<path d="M1418.6,570.4 H1421.8 V578.9" fill="none" stroke="#22222c" stroke-width="1.9" stroke-linecap="round" stroke-linejoin="round"/>
<!-- nav icons -->
<g fill="none" stroke="#858585" stroke-width="2.8" stroke-linecap="round" stroke-linejoin="round">
<path d="M1546,181.3 H1568.5 a4,4 0 0 1 4,4 V197.5 a4,4 0 0 1 -4,4 H1546.5"/>
<path d="M1536.3,357.4 L1553,347.8 Q1558.3,345.2 1563.6,347.8 L1580.7,357.4"/>
<path d="M1544.6,362.3 V368.5 a4,4 0 0 0 4,4 H1568.5 a4,4 0 0 0 4,-4 V362.3"/>
<path d="M1543.2,529.4 H1573.8 M1543.2,540.5 H1573.8 M1543.2,551.5 H1573.8"/>
</g>
<polygon points="1540,182.7 1550,175.8 1550,182.7" fill="#858585"/>
</svg>
</body></html>
